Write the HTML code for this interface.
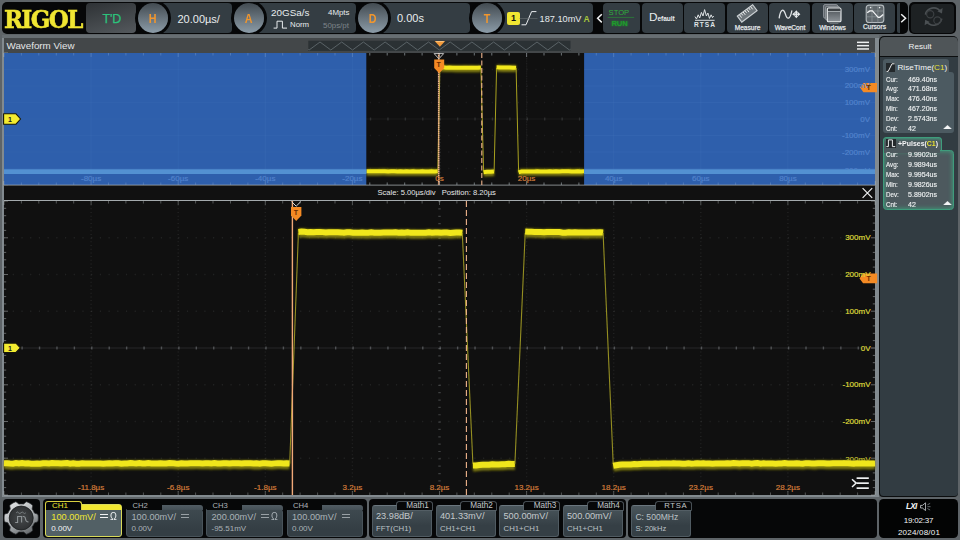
<!DOCTYPE html>
<html><head><meta charset="utf-8"><title>RIGOL Waveform View</title>
<style>
*{box-sizing:border-box;margin:0;padding:0}
html,body{width:960px;height:540px;overflow:hidden;background:#5e6468;font-family:"Liberation Sans",sans-serif;color:#e8ecee}
.a{position:absolute}
.t{position:absolute;white-space:nowrap;line-height:1}
#topbar{left:2px;top:2px;width:906px;height:32px;background:#060708;border-radius:5px}
.btn{position:absolute;top:3px;height:30px;background:#343d43;border-radius:4px}
.knob{position:absolute;top:3px;width:30px;height:30px;border-radius:50%;background:linear-gradient(#424a50,#8c9ca8);box-shadow:0 0 0 3px #060708;clip-path:inset(-1px -4px);color:#f0962e;text-align:center;font-size:12.8px;font-weight:bold;line-height:32px;z-index:3}
.knob span{display:inline-block;transform:scaleX(0.84)}
.lbl{position:absolute;white-space:nowrap;line-height:1;font-size:7px;color:#dfe3e5;text-align:center}
.tl{font-size:8px;text-align:center;-webkit-text-stroke:0.2px}
.vl{font-size:8px;text-align:right;-webkit-text-stroke:0.2px}

.row{position:absolute;left:886px;-webkit-text-stroke:0.15px;font-size:7.6px;line-height:1;white-space:nowrap;color:#eef0f1}
.row i{font-style:normal;display:inline-block;transform-origin:0 0;transform:scaleX(0.82)}
.row b{position:absolute;left:22px;font-weight:normal;transform-origin:0 0;transform:scaleX(0.93)}
.chb{position:absolute;top:501px;height:36px;border-radius:3px}
.chtab{position:absolute;top:501.5px;height:8px;background:#060708;border-radius:2px 2px 0 0;font-size:7.7px;line-height:8.8px;color:#aeb4b8;white-space:nowrap}
.c1{position:absolute;font-size:9.2px;line-height:1;white-space:nowrap}
.c2{position:absolute;font-size:8px;line-height:1;white-space:nowrap}
</style></head><body>
<!-- ===== TOP BAR ===== -->
<div id="topbar" class="a"></div>
<div class="t" id="logo" style="left:4px;top:7.6px;font-family:'DejaVu Serif','Liberation Serif',serif;font-weight:bold;font-size:24px;color:#f0e632;letter-spacing:-1.6px;-webkit-text-stroke:0.6px #f0e632;transform-origin:0 0;transform:scale(0.955,1)">RIGOL</div>
<div class="btn" style="left:86px;width:50px;background:linear-gradient(165deg,#2e3235,#54595d)"></div>
<div class="t" style="left:102.4px;top:13.2px;font-size:12.4px;color:#2cc27c;-webkit-text-stroke:0.25px #2cc27c">T'D</div>

<div class="btn" style="left:160px;width:72px"></div>
<div class="knob" style="left:138px"><span>H</span></div>
<div class="t" style="left:177.5px;top:13.6px;font-size:11px">20.00µs/</div>

<div class="btn" style="left:255px;width:101px"></div>
<div class="knob" style="left:234px"><span>A</span></div>
<div class="t" style="left:271px;top:8.4px;font-size:9.9px">20GSa/s</div>
<svg class="a" style="left:273px;top:20px" width="15" height="9" viewBox="0 0 15 9"><path d="M0.6 8.1H4V1.2H9.4V8.1H14" fill="none" stroke="#e8ecee" stroke-width="1"/></svg>
<div class="t" style="left:290px;top:21.4px;font-size:7.8px">Norm</div>
<div class="t" style="left:328px;top:8.8px;font-size:7.9px">4Mpts</div>
<div class="t" style="left:323px;top:21.8px;font-size:7.9px;color:#7d8489">50ps/pt</div>

<div class="btn" style="left:380px;width:90px"></div>
<div class="knob" style="left:358px"><span>D</span></div>
<div class="t" style="left:397px;top:13px;font-size:11px">0.00s</div>

<div class="btn" style="left:494px;width:99px"></div>
<div class="knob" style="left:472px"><span>T</span></div>
<div class="a" style="left:507px;top:12px;width:13px;height:13px;background:#f0e632;border-radius:2px;color:#111;font-size:9px;font-weight:bold;text-align:center;line-height:13px">1</div>
<div class="t" style="left:539.6px;top:15.3px;font-size:9.2px">187.10mV</div>
<div class="t" style="left:583.6px;top:15.3px;font-size:8.6px;font-weight:bold;color:#a8c83c">A</div>

<div class="btn" style="left:603px;width:37px"></div>
<div class="btn" style="left:642px;width:41px"></div>
<div class="btn" style="left:684px;width:41px"></div>
<div class="btn" style="left:727px;width:41px"></div>
<div class="btn" style="left:769px;width:41px"></div>
<div class="btn" style="left:812px;width:41px"></div>
<div class="btn" style="left:854px;width:41px"></div>
<div class="btn" style="left:897px;width:3px;border-radius:2px 0 0 2px"></div>
<div class="a" style="left:909px;top:2px;width:47px;height:32px;background:#060708;border-radius:5px"></div>
<div class="a" style="left:911px;top:4px;width:43px;height:29px;background:#1d2123;border-radius:4px"></div>


<!-- top button contents -->
<svg class="a" style="left:0;top:0" width="960" height="36" viewBox="0 0 960 36">
<path d="M601.8 14.2L597.6 18.3L601.8 22.4" fill="none" stroke="#f2f3f4" stroke-width="1.5"/>
<path d="M901.2 14.3L905.6 18.3L901.2 22.3" fill="none" stroke="#f2f3f4" stroke-width="1.5"/>
<rect x="607.6" y="16.9" width="26.6" height="0.9" fill="#2b7a38"/>
<!-- trigger edge icon -->
<path d="M521.5 24.8H526L531.6 11.6H536.4" fill="none" stroke="#e8ecee" stroke-width="1"/>
<rect x="519.5" y="18" width="18" height="0.6" fill="#6a7074"/>
<!-- RTSA icon -->
<path d="M695 16.6l1.5 2.4 1.7-4.2 1.5 3.2 1.7-5.6 1.6 3.6 1.6-6.4 1.8 6.4 1.5-3 1.6 5.4 1.6-3.6 1.4 2.8 1.2-1.6" fill="none" stroke="#dfe3e5" stroke-width="1"/>
<rect x="695" y="19.8" width="19.6" height="1" fill="#dfe3e5"/>
<!-- Measure ruler -->
<g transform="translate(747.2 13.4) rotate(-37)"><rect x="-9.6" y="-3.7" width="19.2" height="7.4" fill="#6e767b" stroke="#ccd1d4" stroke-width="1.1"/><path d="M-7 -3.6v3.6M-4.7 -3.6v2.6M-2.4 -3.6v3.6M-0.1 -3.6v2.6M2.2 -3.6v3.6M4.5 -3.6v2.6M6.8 -3.6v3.6" stroke="#eef0f1" stroke-width="0.9"/></g>
<!-- WaveCont -->
<path d="M779.2 17.8c1.4 -9.4 4.6 -9.4 6.2 -3.6s4.6 5.8 6.4 -3.4" fill="none" stroke="#dfe3e5" stroke-width="1.3" stroke-linecap="round"/>
<g fill="#e8ecee"><path d="M796.3 10.2l2.1 2.5h-4.2z"/><path d="M796.3 18.2l2.1 -2.5h-4.2z"/><path d="M792.2 14.2l2.5 -2.1v4.2z"/><path d="M800.4 14.2l-2.5 -2.1v4.2z"/><rect x="795.6" y="12" width="1.4" height="4.4"/><rect x="794.1" y="13.5" width="4.4" height="1.4"/></g>
<!-- Windows -->
<defs><linearGradient id="wg" x1="0" y1="0" x2="0" y2="1"><stop offset="0" stop-color="#4a5055"/><stop offset="1" stop-color="#8e9499"/></linearGradient></defs>
<g fill="#5a6166" stroke="#959ba0" stroke-width="0.9"><rect x="823.6" y="4.6" width="14" height="13.6" rx="1.4"/><rect x="825.4" y="6.3" width="14" height="13.6" rx="1.4"/></g>
<rect x="827.3" y="8" width="13.7" height="13.8" rx="1.4" fill="url(#wg)" stroke="#eceff0" stroke-width="1.1"/>
<rect x="828" y="8.8" width="12.3" height="2.4" fill="#3c4145"/>
<rect x="828" y="11.3" width="12.3" height="0.7" fill="#c8cdd0"/>
<rect x="829.6" y="23" width="8.8" height="0.7" fill="#7d858a"/>
<!-- Cursors -->
<rect x="866.2" y="5.1" width="17.6" height="17.4" rx="2.8" fill="#5e666b" stroke="#b4babe" stroke-width="1.1"/>
<path d="M872 5.4v17M877.9 5.4v17M866.6 11h17M866.6 16.8h17" stroke="#8d959a" stroke-width="0.7" fill="none"/>
<path d="M867.2 12.8l2.6 -1.9h2.6l5.8 6.4h1.6l3.4 -2.8" fill="none" stroke="#f2f3f4" stroke-width="1.2"/>
<circle cx="870.6" cy="7.6" r="0.8" fill="#e8ecee"/><circle cx="879.6" cy="7.6" r="0.8" fill="#e8ecee"/>
<!-- refresh icon -->
<g fill="none" stroke="#4b5053" stroke-width="1.6"><path d="M925.4 14.6a8.4 8.4 0 0 1 15 -3.2"/><path d="M941.8 18.6a8.4 8.4 0 0 1 -15 3.2"/></g>
<path d="M942.6 8l-0.6 5.4-4.6-2.2z" fill="#4b5053"/><path d="M924.6 25.2l0.6-5.4 4.6 2.2z" fill="#4b5053"/>
<circle cx="930.2" cy="14.2" r="3.6" fill="none" stroke="#3c4043" stroke-width="1.2"/><circle cx="937.4" cy="20.4" r="3.6" fill="none" stroke="#3c4043" stroke-width="1.2"/>
</svg>
<div class="t" style="left:608.6px;top:9.4px;font-size:7.6px;color:#2fae3c">STOP</div>
<div class="t" style="left:611.4px;top:19.6px;font-size:7.6px;font-weight:bold;color:#1f9a2c;text-shadow:0 0 2px #1f9a2c">RUN</div>
<div class="t" style="left:649px;top:12.2px;font-size:11.8px;color:#e8ecee">D<span style="font-size:6.6px;font-weight:bold;letter-spacing:-0.1px">efault</span></div>
<div class="t" style="left:684px;width:41px;text-align:center;top:21.9px;font-size:6.6px;font-weight:bold;color:#dfe3e5;letter-spacing:1px;padding-left:1px">RTSA</div>
<div class="t" style="left:727px;width:41px;text-align:center;top:24.5px;font-size:6.6px;-webkit-text-stroke:0.25px #e4e7e9;color:#e4e7e9">Measure</div>
<div class="t" style="left:769.5px;width:41px;text-align:center;top:24.5px;font-size:6.6px;-webkit-text-stroke:0.25px #e4e7e9;color:#e4e7e9">WaveCont</div>
<div class="t" style="left:812px;width:41px;text-align:center;top:24.5px;font-size:6.6px;-webkit-text-stroke:0.25px #e4e7e9;color:#e4e7e9">Windows</div>
<div class="t" style="left:854px;width:41px;text-align:center;top:24.3px;font-size:6.6px;-webkit-text-stroke:0.25px #e4e7e9;color:#e4e7e9">Cursors</div>

<!-- ===== WAVEFORM WINDOW ===== -->
<div class="a" style="left:2px;top:35.5px;width:876.5px;height:461.5px;background:#828a8f"></div>
<div class="a" style="left:2px;top:35px;width:876.5px;height:3.1px;background:#676e72"></div>
<div class="a" style="left:4px;top:38px;width:871px;height:15px;background:#434749"></div>
<div class="t" style="left:6.5px;top:40.6px;font-size:9.8px;color:#e4e6e7">Waveform View</div>
<div class="a" style="left:4px;top:53px;width:871px;height:442px;background:#0d0d0d"></div>
<svg class="a" style="left:0;top:0" width="960" height="540" viewBox="0 0 960 540">
<defs><filter id="gl" filterUnits="userSpaceOnUse" x="0" y="0" width="960" height="540"><feGaussianBlur stdDeviation="1.1"/></filter><filter id="gs" filterUnits="userSpaceOnUse" x="0" y="0" width="960" height="540"><feGaussianBlur stdDeviation="0.6"/></filter></defs>
<rect x="4.0" y="53.0" width="871.0" height="132.0" fill="#101010"/>
<rect x="4.0" y="201.0" width="871.0" height="294.0" fill="#101010"/>
<line x1="91.1" y1="53.0" x2="91.1" y2="185.0" stroke="#9aa0a4" stroke-opacity="0.1" stroke-width="1.4" stroke-dasharray="1 0.65"/>
<line x1="178.2" y1="53.0" x2="178.2" y2="185.0" stroke="#9aa0a4" stroke-opacity="0.1" stroke-width="1.4" stroke-dasharray="1 0.65"/>
<line x1="265.3" y1="53.0" x2="265.3" y2="185.0" stroke="#9aa0a4" stroke-opacity="0.1" stroke-width="1.4" stroke-dasharray="1 0.65"/>
<line x1="352.4" y1="53.0" x2="352.4" y2="185.0" stroke="#9aa0a4" stroke-opacity="0.1" stroke-width="1.4" stroke-dasharray="1 0.65"/>
<line x1="526.6" y1="53.0" x2="526.6" y2="185.0" stroke="#9aa0a4" stroke-opacity="0.1" stroke-width="1.4" stroke-dasharray="1 0.65"/>
<line x1="613.7" y1="53.0" x2="613.7" y2="185.0" stroke="#9aa0a4" stroke-opacity="0.1" stroke-width="1.4" stroke-dasharray="1 0.65"/>
<line x1="700.8" y1="53.0" x2="700.8" y2="185.0" stroke="#9aa0a4" stroke-opacity="0.1" stroke-width="1.4" stroke-dasharray="1 0.65"/>
<line x1="787.9" y1="53.0" x2="787.9" y2="185.0" stroke="#9aa0a4" stroke-opacity="0.1" stroke-width="1.4" stroke-dasharray="1 0.65"/>
<line x1="4.0" y1="69.5" x2="875.0" y2="69.5" stroke="#9aa0a4" stroke-opacity="0.1" stroke-width="1.4" stroke-dasharray="1.2 7.51"/>
<line x1="4.0" y1="86.0" x2="875.0" y2="86.0" stroke="#9aa0a4" stroke-opacity="0.1" stroke-width="1.4" stroke-dasharray="1.2 7.51"/>
<line x1="4.0" y1="102.5" x2="875.0" y2="102.5" stroke="#9aa0a4" stroke-opacity="0.1" stroke-width="1.4" stroke-dasharray="1.2 7.51"/>
<line x1="4.0" y1="135.5" x2="875.0" y2="135.5" stroke="#9aa0a4" stroke-opacity="0.1" stroke-width="1.4" stroke-dasharray="1.2 7.51"/>
<line x1="4.0" y1="152.0" x2="875.0" y2="152.0" stroke="#9aa0a4" stroke-opacity="0.1" stroke-width="1.4" stroke-dasharray="1.2 7.51"/>
<line x1="4.0" y1="168.5" x2="875.0" y2="168.5" stroke="#9aa0a4" stroke-opacity="0.1" stroke-width="1.4" stroke-dasharray="1.2 7.51"/>
<line x1="4.0" y1="119.0" x2="875.0" y2="119.0" stroke="#9aa0a4" stroke-opacity="0.08000000000000002" stroke-width="1"/>
<line x1="4.0" y1="119.0" x2="875.0" y2="119.0" stroke="#9aa0a4" stroke-opacity="0.2" stroke-width="3" stroke-dasharray="1.4 16.02"/>
<line x1="439.5" y1="53.0" x2="439.5" y2="185.0" stroke="#9aa0a4" stroke-opacity="0.16000000000000003" stroke-width="2.4" stroke-dasharray="1.2 2.10"/>
<line x1="4.0" y1="53.0" x2="4.0" y2="57.0" stroke="#c8ccce" stroke-opacity="0.36" stroke-width="1"/>
<line x1="21.4" y1="53.0" x2="21.4" y2="55.5" stroke="#c8ccce" stroke-opacity="0.36" stroke-width="1"/>
<line x1="38.8" y1="53.0" x2="38.8" y2="55.5" stroke="#c8ccce" stroke-opacity="0.36" stroke-width="1"/>
<line x1="56.3" y1="53.0" x2="56.3" y2="55.5" stroke="#c8ccce" stroke-opacity="0.36" stroke-width="1"/>
<line x1="73.7" y1="53.0" x2="73.7" y2="55.5" stroke="#c8ccce" stroke-opacity="0.36" stroke-width="1"/>
<line x1="91.1" y1="53.0" x2="91.1" y2="57.0" stroke="#c8ccce" stroke-opacity="0.36" stroke-width="1"/>
<line x1="108.5" y1="53.0" x2="108.5" y2="55.5" stroke="#c8ccce" stroke-opacity="0.36" stroke-width="1"/>
<line x1="125.9" y1="53.0" x2="125.9" y2="55.5" stroke="#c8ccce" stroke-opacity="0.36" stroke-width="1"/>
<line x1="143.4" y1="53.0" x2="143.4" y2="55.5" stroke="#c8ccce" stroke-opacity="0.36" stroke-width="1"/>
<line x1="160.8" y1="53.0" x2="160.8" y2="55.5" stroke="#c8ccce" stroke-opacity="0.36" stroke-width="1"/>
<line x1="178.2" y1="53.0" x2="178.2" y2="57.0" stroke="#c8ccce" stroke-opacity="0.36" stroke-width="1"/>
<line x1="195.6" y1="53.0" x2="195.6" y2="55.5" stroke="#c8ccce" stroke-opacity="0.36" stroke-width="1"/>
<line x1="213.0" y1="53.0" x2="213.0" y2="55.5" stroke="#c8ccce" stroke-opacity="0.36" stroke-width="1"/>
<line x1="230.5" y1="53.0" x2="230.5" y2="55.5" stroke="#c8ccce" stroke-opacity="0.36" stroke-width="1"/>
<line x1="247.9" y1="53.0" x2="247.9" y2="55.5" stroke="#c8ccce" stroke-opacity="0.36" stroke-width="1"/>
<line x1="265.3" y1="53.0" x2="265.3" y2="57.0" stroke="#c8ccce" stroke-opacity="0.36" stroke-width="1"/>
<line x1="282.7" y1="53.0" x2="282.7" y2="55.5" stroke="#c8ccce" stroke-opacity="0.36" stroke-width="1"/>
<line x1="300.1" y1="53.0" x2="300.1" y2="55.5" stroke="#c8ccce" stroke-opacity="0.36" stroke-width="1"/>
<line x1="317.6" y1="53.0" x2="317.6" y2="55.5" stroke="#c8ccce" stroke-opacity="0.36" stroke-width="1"/>
<line x1="335.0" y1="53.0" x2="335.0" y2="55.5" stroke="#c8ccce" stroke-opacity="0.36" stroke-width="1"/>
<line x1="352.4" y1="53.0" x2="352.4" y2="57.0" stroke="#c8ccce" stroke-opacity="0.36" stroke-width="1"/>
<line x1="369.8" y1="53.0" x2="369.8" y2="55.5" stroke="#c8ccce" stroke-opacity="0.36" stroke-width="1"/>
<line x1="387.2" y1="53.0" x2="387.2" y2="55.5" stroke="#c8ccce" stroke-opacity="0.36" stroke-width="1"/>
<line x1="404.7" y1="53.0" x2="404.7" y2="55.5" stroke="#c8ccce" stroke-opacity="0.36" stroke-width="1"/>
<line x1="422.1" y1="53.0" x2="422.1" y2="55.5" stroke="#c8ccce" stroke-opacity="0.36" stroke-width="1"/>
<line x1="439.5" y1="53.0" x2="439.5" y2="57.0" stroke="#c8ccce" stroke-opacity="0.36" stroke-width="1"/>
<line x1="456.9" y1="53.0" x2="456.9" y2="55.5" stroke="#c8ccce" stroke-opacity="0.36" stroke-width="1"/>
<line x1="474.3" y1="53.0" x2="474.3" y2="55.5" stroke="#c8ccce" stroke-opacity="0.36" stroke-width="1"/>
<line x1="491.8" y1="53.0" x2="491.8" y2="55.5" stroke="#c8ccce" stroke-opacity="0.36" stroke-width="1"/>
<line x1="509.2" y1="53.0" x2="509.2" y2="55.5" stroke="#c8ccce" stroke-opacity="0.36" stroke-width="1"/>
<line x1="526.6" y1="53.0" x2="526.6" y2="57.0" stroke="#c8ccce" stroke-opacity="0.36" stroke-width="1"/>
<line x1="544.0" y1="53.0" x2="544.0" y2="55.5" stroke="#c8ccce" stroke-opacity="0.36" stroke-width="1"/>
<line x1="561.4" y1="53.0" x2="561.4" y2="55.5" stroke="#c8ccce" stroke-opacity="0.36" stroke-width="1"/>
<line x1="578.9" y1="53.0" x2="578.9" y2="55.5" stroke="#c8ccce" stroke-opacity="0.36" stroke-width="1"/>
<line x1="596.3" y1="53.0" x2="596.3" y2="55.5" stroke="#c8ccce" stroke-opacity="0.36" stroke-width="1"/>
<line x1="613.7" y1="53.0" x2="613.7" y2="57.0" stroke="#c8ccce" stroke-opacity="0.36" stroke-width="1"/>
<line x1="631.1" y1="53.0" x2="631.1" y2="55.5" stroke="#c8ccce" stroke-opacity="0.36" stroke-width="1"/>
<line x1="648.5" y1="53.0" x2="648.5" y2="55.5" stroke="#c8ccce" stroke-opacity="0.36" stroke-width="1"/>
<line x1="666.0" y1="53.0" x2="666.0" y2="55.5" stroke="#c8ccce" stroke-opacity="0.36" stroke-width="1"/>
<line x1="683.4" y1="53.0" x2="683.4" y2="55.5" stroke="#c8ccce" stroke-opacity="0.36" stroke-width="1"/>
<line x1="700.8" y1="53.0" x2="700.8" y2="57.0" stroke="#c8ccce" stroke-opacity="0.36" stroke-width="1"/>
<line x1="718.2" y1="53.0" x2="718.2" y2="55.5" stroke="#c8ccce" stroke-opacity="0.36" stroke-width="1"/>
<line x1="735.6" y1="53.0" x2="735.6" y2="55.5" stroke="#c8ccce" stroke-opacity="0.36" stroke-width="1"/>
<line x1="753.1" y1="53.0" x2="753.1" y2="55.5" stroke="#c8ccce" stroke-opacity="0.36" stroke-width="1"/>
<line x1="770.5" y1="53.0" x2="770.5" y2="55.5" stroke="#c8ccce" stroke-opacity="0.36" stroke-width="1"/>
<line x1="787.9" y1="53.0" x2="787.9" y2="57.0" stroke="#c8ccce" stroke-opacity="0.36" stroke-width="1"/>
<line x1="805.3" y1="53.0" x2="805.3" y2="55.5" stroke="#c8ccce" stroke-opacity="0.36" stroke-width="1"/>
<line x1="822.7" y1="53.0" x2="822.7" y2="55.5" stroke="#c8ccce" stroke-opacity="0.36" stroke-width="1"/>
<line x1="840.2" y1="53.0" x2="840.2" y2="55.5" stroke="#c8ccce" stroke-opacity="0.36" stroke-width="1"/>
<line x1="857.6" y1="53.0" x2="857.6" y2="55.5" stroke="#c8ccce" stroke-opacity="0.36" stroke-width="1"/>
<line x1="875.0" y1="53.0" x2="875.0" y2="57.0" stroke="#c8ccce" stroke-opacity="0.36" stroke-width="1"/>
<line x1="4.0" y1="185.0" x2="4.0" y2="181.0" stroke="#c8ccce" stroke-opacity="0.36" stroke-width="1"/>
<line x1="21.4" y1="185.0" x2="21.4" y2="182.5" stroke="#c8ccce" stroke-opacity="0.36" stroke-width="1"/>
<line x1="38.8" y1="185.0" x2="38.8" y2="182.5" stroke="#c8ccce" stroke-opacity="0.36" stroke-width="1"/>
<line x1="56.3" y1="185.0" x2="56.3" y2="182.5" stroke="#c8ccce" stroke-opacity="0.36" stroke-width="1"/>
<line x1="73.7" y1="185.0" x2="73.7" y2="182.5" stroke="#c8ccce" stroke-opacity="0.36" stroke-width="1"/>
<line x1="91.1" y1="185.0" x2="91.1" y2="181.0" stroke="#c8ccce" stroke-opacity="0.36" stroke-width="1"/>
<line x1="108.5" y1="185.0" x2="108.5" y2="182.5" stroke="#c8ccce" stroke-opacity="0.36" stroke-width="1"/>
<line x1="125.9" y1="185.0" x2="125.9" y2="182.5" stroke="#c8ccce" stroke-opacity="0.36" stroke-width="1"/>
<line x1="143.4" y1="185.0" x2="143.4" y2="182.5" stroke="#c8ccce" stroke-opacity="0.36" stroke-width="1"/>
<line x1="160.8" y1="185.0" x2="160.8" y2="182.5" stroke="#c8ccce" stroke-opacity="0.36" stroke-width="1"/>
<line x1="178.2" y1="185.0" x2="178.2" y2="181.0" stroke="#c8ccce" stroke-opacity="0.36" stroke-width="1"/>
<line x1="195.6" y1="185.0" x2="195.6" y2="182.5" stroke="#c8ccce" stroke-opacity="0.36" stroke-width="1"/>
<line x1="213.0" y1="185.0" x2="213.0" y2="182.5" stroke="#c8ccce" stroke-opacity="0.36" stroke-width="1"/>
<line x1="230.5" y1="185.0" x2="230.5" y2="182.5" stroke="#c8ccce" stroke-opacity="0.36" stroke-width="1"/>
<line x1="247.9" y1="185.0" x2="247.9" y2="182.5" stroke="#c8ccce" stroke-opacity="0.36" stroke-width="1"/>
<line x1="265.3" y1="185.0" x2="265.3" y2="181.0" stroke="#c8ccce" stroke-opacity="0.36" stroke-width="1"/>
<line x1="282.7" y1="185.0" x2="282.7" y2="182.5" stroke="#c8ccce" stroke-opacity="0.36" stroke-width="1"/>
<line x1="300.1" y1="185.0" x2="300.1" y2="182.5" stroke="#c8ccce" stroke-opacity="0.36" stroke-width="1"/>
<line x1="317.6" y1="185.0" x2="317.6" y2="182.5" stroke="#c8ccce" stroke-opacity="0.36" stroke-width="1"/>
<line x1="335.0" y1="185.0" x2="335.0" y2="182.5" stroke="#c8ccce" stroke-opacity="0.36" stroke-width="1"/>
<line x1="352.4" y1="185.0" x2="352.4" y2="181.0" stroke="#c8ccce" stroke-opacity="0.36" stroke-width="1"/>
<line x1="369.8" y1="185.0" x2="369.8" y2="182.5" stroke="#c8ccce" stroke-opacity="0.36" stroke-width="1"/>
<line x1="387.2" y1="185.0" x2="387.2" y2="182.5" stroke="#c8ccce" stroke-opacity="0.36" stroke-width="1"/>
<line x1="404.7" y1="185.0" x2="404.7" y2="182.5" stroke="#c8ccce" stroke-opacity="0.36" stroke-width="1"/>
<line x1="422.1" y1="185.0" x2="422.1" y2="182.5" stroke="#c8ccce" stroke-opacity="0.36" stroke-width="1"/>
<line x1="439.5" y1="185.0" x2="439.5" y2="181.0" stroke="#c8ccce" stroke-opacity="0.36" stroke-width="1"/>
<line x1="456.9" y1="185.0" x2="456.9" y2="182.5" stroke="#c8ccce" stroke-opacity="0.36" stroke-width="1"/>
<line x1="474.3" y1="185.0" x2="474.3" y2="182.5" stroke="#c8ccce" stroke-opacity="0.36" stroke-width="1"/>
<line x1="491.8" y1="185.0" x2="491.8" y2="182.5" stroke="#c8ccce" stroke-opacity="0.36" stroke-width="1"/>
<line x1="509.2" y1="185.0" x2="509.2" y2="182.5" stroke="#c8ccce" stroke-opacity="0.36" stroke-width="1"/>
<line x1="526.6" y1="185.0" x2="526.6" y2="181.0" stroke="#c8ccce" stroke-opacity="0.36" stroke-width="1"/>
<line x1="544.0" y1="185.0" x2="544.0" y2="182.5" stroke="#c8ccce" stroke-opacity="0.36" stroke-width="1"/>
<line x1="561.4" y1="185.0" x2="561.4" y2="182.5" stroke="#c8ccce" stroke-opacity="0.36" stroke-width="1"/>
<line x1="578.9" y1="185.0" x2="578.9" y2="182.5" stroke="#c8ccce" stroke-opacity="0.36" stroke-width="1"/>
<line x1="596.3" y1="185.0" x2="596.3" y2="182.5" stroke="#c8ccce" stroke-opacity="0.36" stroke-width="1"/>
<line x1="613.7" y1="185.0" x2="613.7" y2="181.0" stroke="#c8ccce" stroke-opacity="0.36" stroke-width="1"/>
<line x1="631.1" y1="185.0" x2="631.1" y2="182.5" stroke="#c8ccce" stroke-opacity="0.36" stroke-width="1"/>
<line x1="648.5" y1="185.0" x2="648.5" y2="182.5" stroke="#c8ccce" stroke-opacity="0.36" stroke-width="1"/>
<line x1="666.0" y1="185.0" x2="666.0" y2="182.5" stroke="#c8ccce" stroke-opacity="0.36" stroke-width="1"/>
<line x1="683.4" y1="185.0" x2="683.4" y2="182.5" stroke="#c8ccce" stroke-opacity="0.36" stroke-width="1"/>
<line x1="700.8" y1="185.0" x2="700.8" y2="181.0" stroke="#c8ccce" stroke-opacity="0.36" stroke-width="1"/>
<line x1="718.2" y1="185.0" x2="718.2" y2="182.5" stroke="#c8ccce" stroke-opacity="0.36" stroke-width="1"/>
<line x1="735.6" y1="185.0" x2="735.6" y2="182.5" stroke="#c8ccce" stroke-opacity="0.36" stroke-width="1"/>
<line x1="753.1" y1="185.0" x2="753.1" y2="182.5" stroke="#c8ccce" stroke-opacity="0.36" stroke-width="1"/>
<line x1="770.5" y1="185.0" x2="770.5" y2="182.5" stroke="#c8ccce" stroke-opacity="0.36" stroke-width="1"/>
<line x1="787.9" y1="185.0" x2="787.9" y2="181.0" stroke="#c8ccce" stroke-opacity="0.36" stroke-width="1"/>
<line x1="805.3" y1="185.0" x2="805.3" y2="182.5" stroke="#c8ccce" stroke-opacity="0.36" stroke-width="1"/>
<line x1="822.7" y1="185.0" x2="822.7" y2="182.5" stroke="#c8ccce" stroke-opacity="0.36" stroke-width="1"/>
<line x1="840.2" y1="185.0" x2="840.2" y2="182.5" stroke="#c8ccce" stroke-opacity="0.36" stroke-width="1"/>
<line x1="857.6" y1="185.0" x2="857.6" y2="182.5" stroke="#c8ccce" stroke-opacity="0.36" stroke-width="1"/>
<line x1="875.0" y1="185.0" x2="875.0" y2="181.0" stroke="#c8ccce" stroke-opacity="0.36" stroke-width="1"/>
<line x1="4.0" y1="53.0" x2="8.0" y2="53.0" stroke="#c8ccce" stroke-opacity="0.45" stroke-width="1"/>
<line x1="875.0" y1="53.0" x2="871.0" y2="53.0" stroke="#c8ccce" stroke-opacity="0.45" stroke-width="1"/>
<line x1="4.0" y1="56.3" x2="6.2" y2="56.3" stroke="#c8ccce" stroke-opacity="0.45" stroke-width="1"/>
<line x1="875.0" y1="56.3" x2="872.8" y2="56.3" stroke="#c8ccce" stroke-opacity="0.45" stroke-width="1"/>
<line x1="4.0" y1="59.6" x2="6.2" y2="59.6" stroke="#c8ccce" stroke-opacity="0.45" stroke-width="1"/>
<line x1="875.0" y1="59.6" x2="872.8" y2="59.6" stroke="#c8ccce" stroke-opacity="0.45" stroke-width="1"/>
<line x1="4.0" y1="62.9" x2="6.2" y2="62.9" stroke="#c8ccce" stroke-opacity="0.45" stroke-width="1"/>
<line x1="875.0" y1="62.9" x2="872.8" y2="62.9" stroke="#c8ccce" stroke-opacity="0.45" stroke-width="1"/>
<line x1="4.0" y1="66.2" x2="6.2" y2="66.2" stroke="#c8ccce" stroke-opacity="0.45" stroke-width="1"/>
<line x1="875.0" y1="66.2" x2="872.8" y2="66.2" stroke="#c8ccce" stroke-opacity="0.45" stroke-width="1"/>
<line x1="4.0" y1="69.5" x2="8.0" y2="69.5" stroke="#c8ccce" stroke-opacity="0.45" stroke-width="1"/>
<line x1="875.0" y1="69.5" x2="871.0" y2="69.5" stroke="#c8ccce" stroke-opacity="0.45" stroke-width="1"/>
<line x1="4.0" y1="72.8" x2="6.2" y2="72.8" stroke="#c8ccce" stroke-opacity="0.45" stroke-width="1"/>
<line x1="875.0" y1="72.8" x2="872.8" y2="72.8" stroke="#c8ccce" stroke-opacity="0.45" stroke-width="1"/>
<line x1="4.0" y1="76.1" x2="6.2" y2="76.1" stroke="#c8ccce" stroke-opacity="0.45" stroke-width="1"/>
<line x1="875.0" y1="76.1" x2="872.8" y2="76.1" stroke="#c8ccce" stroke-opacity="0.45" stroke-width="1"/>
<line x1="4.0" y1="79.4" x2="6.2" y2="79.4" stroke="#c8ccce" stroke-opacity="0.45" stroke-width="1"/>
<line x1="875.0" y1="79.4" x2="872.8" y2="79.4" stroke="#c8ccce" stroke-opacity="0.45" stroke-width="1"/>
<line x1="4.0" y1="82.7" x2="6.2" y2="82.7" stroke="#c8ccce" stroke-opacity="0.45" stroke-width="1"/>
<line x1="875.0" y1="82.7" x2="872.8" y2="82.7" stroke="#c8ccce" stroke-opacity="0.45" stroke-width="1"/>
<line x1="4.0" y1="86.0" x2="8.0" y2="86.0" stroke="#c8ccce" stroke-opacity="0.45" stroke-width="1"/>
<line x1="875.0" y1="86.0" x2="871.0" y2="86.0" stroke="#c8ccce" stroke-opacity="0.45" stroke-width="1"/>
<line x1="4.0" y1="89.3" x2="6.2" y2="89.3" stroke="#c8ccce" stroke-opacity="0.45" stroke-width="1"/>
<line x1="875.0" y1="89.3" x2="872.8" y2="89.3" stroke="#c8ccce" stroke-opacity="0.45" stroke-width="1"/>
<line x1="4.0" y1="92.6" x2="6.2" y2="92.6" stroke="#c8ccce" stroke-opacity="0.45" stroke-width="1"/>
<line x1="875.0" y1="92.6" x2="872.8" y2="92.6" stroke="#c8ccce" stroke-opacity="0.45" stroke-width="1"/>
<line x1="4.0" y1="95.9" x2="6.2" y2="95.9" stroke="#c8ccce" stroke-opacity="0.45" stroke-width="1"/>
<line x1="875.0" y1="95.9" x2="872.8" y2="95.9" stroke="#c8ccce" stroke-opacity="0.45" stroke-width="1"/>
<line x1="4.0" y1="99.2" x2="6.2" y2="99.2" stroke="#c8ccce" stroke-opacity="0.45" stroke-width="1"/>
<line x1="875.0" y1="99.2" x2="872.8" y2="99.2" stroke="#c8ccce" stroke-opacity="0.45" stroke-width="1"/>
<line x1="4.0" y1="102.5" x2="8.0" y2="102.5" stroke="#c8ccce" stroke-opacity="0.45" stroke-width="1"/>
<line x1="875.0" y1="102.5" x2="871.0" y2="102.5" stroke="#c8ccce" stroke-opacity="0.45" stroke-width="1"/>
<line x1="4.0" y1="105.8" x2="6.2" y2="105.8" stroke="#c8ccce" stroke-opacity="0.45" stroke-width="1"/>
<line x1="875.0" y1="105.8" x2="872.8" y2="105.8" stroke="#c8ccce" stroke-opacity="0.45" stroke-width="1"/>
<line x1="4.0" y1="109.1" x2="6.2" y2="109.1" stroke="#c8ccce" stroke-opacity="0.45" stroke-width="1"/>
<line x1="875.0" y1="109.1" x2="872.8" y2="109.1" stroke="#c8ccce" stroke-opacity="0.45" stroke-width="1"/>
<line x1="4.0" y1="112.4" x2="6.2" y2="112.4" stroke="#c8ccce" stroke-opacity="0.45" stroke-width="1"/>
<line x1="875.0" y1="112.4" x2="872.8" y2="112.4" stroke="#c8ccce" stroke-opacity="0.45" stroke-width="1"/>
<line x1="4.0" y1="115.7" x2="6.2" y2="115.7" stroke="#c8ccce" stroke-opacity="0.45" stroke-width="1"/>
<line x1="875.0" y1="115.7" x2="872.8" y2="115.7" stroke="#c8ccce" stroke-opacity="0.45" stroke-width="1"/>
<line x1="4.0" y1="119.0" x2="8.0" y2="119.0" stroke="#c8ccce" stroke-opacity="0.45" stroke-width="1"/>
<line x1="875.0" y1="119.0" x2="871.0" y2="119.0" stroke="#c8ccce" stroke-opacity="0.45" stroke-width="1"/>
<line x1="4.0" y1="122.3" x2="6.2" y2="122.3" stroke="#c8ccce" stroke-opacity="0.45" stroke-width="1"/>
<line x1="875.0" y1="122.3" x2="872.8" y2="122.3" stroke="#c8ccce" stroke-opacity="0.45" stroke-width="1"/>
<line x1="4.0" y1="125.6" x2="6.2" y2="125.6" stroke="#c8ccce" stroke-opacity="0.45" stroke-width="1"/>
<line x1="875.0" y1="125.6" x2="872.8" y2="125.6" stroke="#c8ccce" stroke-opacity="0.45" stroke-width="1"/>
<line x1="4.0" y1="128.9" x2="6.2" y2="128.9" stroke="#c8ccce" stroke-opacity="0.45" stroke-width="1"/>
<line x1="875.0" y1="128.9" x2="872.8" y2="128.9" stroke="#c8ccce" stroke-opacity="0.45" stroke-width="1"/>
<line x1="4.0" y1="132.2" x2="6.2" y2="132.2" stroke="#c8ccce" stroke-opacity="0.45" stroke-width="1"/>
<line x1="875.0" y1="132.2" x2="872.8" y2="132.2" stroke="#c8ccce" stroke-opacity="0.45" stroke-width="1"/>
<line x1="4.0" y1="135.5" x2="8.0" y2="135.5" stroke="#c8ccce" stroke-opacity="0.45" stroke-width="1"/>
<line x1="875.0" y1="135.5" x2="871.0" y2="135.5" stroke="#c8ccce" stroke-opacity="0.45" stroke-width="1"/>
<line x1="4.0" y1="138.8" x2="6.2" y2="138.8" stroke="#c8ccce" stroke-opacity="0.45" stroke-width="1"/>
<line x1="875.0" y1="138.8" x2="872.8" y2="138.8" stroke="#c8ccce" stroke-opacity="0.45" stroke-width="1"/>
<line x1="4.0" y1="142.1" x2="6.2" y2="142.1" stroke="#c8ccce" stroke-opacity="0.45" stroke-width="1"/>
<line x1="875.0" y1="142.1" x2="872.8" y2="142.1" stroke="#c8ccce" stroke-opacity="0.45" stroke-width="1"/>
<line x1="4.0" y1="145.4" x2="6.2" y2="145.4" stroke="#c8ccce" stroke-opacity="0.45" stroke-width="1"/>
<line x1="875.0" y1="145.4" x2="872.8" y2="145.4" stroke="#c8ccce" stroke-opacity="0.45" stroke-width="1"/>
<line x1="4.0" y1="148.7" x2="6.2" y2="148.7" stroke="#c8ccce" stroke-opacity="0.45" stroke-width="1"/>
<line x1="875.0" y1="148.7" x2="872.8" y2="148.7" stroke="#c8ccce" stroke-opacity="0.45" stroke-width="1"/>
<line x1="4.0" y1="152.0" x2="8.0" y2="152.0" stroke="#c8ccce" stroke-opacity="0.45" stroke-width="1"/>
<line x1="875.0" y1="152.0" x2="871.0" y2="152.0" stroke="#c8ccce" stroke-opacity="0.45" stroke-width="1"/>
<line x1="4.0" y1="155.3" x2="6.2" y2="155.3" stroke="#c8ccce" stroke-opacity="0.45" stroke-width="1"/>
<line x1="875.0" y1="155.3" x2="872.8" y2="155.3" stroke="#c8ccce" stroke-opacity="0.45" stroke-width="1"/>
<line x1="4.0" y1="158.6" x2="6.2" y2="158.6" stroke="#c8ccce" stroke-opacity="0.45" stroke-width="1"/>
<line x1="875.0" y1="158.6" x2="872.8" y2="158.6" stroke="#c8ccce" stroke-opacity="0.45" stroke-width="1"/>
<line x1="4.0" y1="161.9" x2="6.2" y2="161.9" stroke="#c8ccce" stroke-opacity="0.45" stroke-width="1"/>
<line x1="875.0" y1="161.9" x2="872.8" y2="161.9" stroke="#c8ccce" stroke-opacity="0.45" stroke-width="1"/>
<line x1="4.0" y1="165.2" x2="6.2" y2="165.2" stroke="#c8ccce" stroke-opacity="0.45" stroke-width="1"/>
<line x1="875.0" y1="165.2" x2="872.8" y2="165.2" stroke="#c8ccce" stroke-opacity="0.45" stroke-width="1"/>
<line x1="4.0" y1="168.5" x2="8.0" y2="168.5" stroke="#c8ccce" stroke-opacity="0.45" stroke-width="1"/>
<line x1="875.0" y1="168.5" x2="871.0" y2="168.5" stroke="#c8ccce" stroke-opacity="0.45" stroke-width="1"/>
<line x1="4.0" y1="171.8" x2="6.2" y2="171.8" stroke="#c8ccce" stroke-opacity="0.45" stroke-width="1"/>
<line x1="875.0" y1="171.8" x2="872.8" y2="171.8" stroke="#c8ccce" stroke-opacity="0.45" stroke-width="1"/>
<line x1="4.0" y1="175.1" x2="6.2" y2="175.1" stroke="#c8ccce" stroke-opacity="0.45" stroke-width="1"/>
<line x1="875.0" y1="175.1" x2="872.8" y2="175.1" stroke="#c8ccce" stroke-opacity="0.45" stroke-width="1"/>
<line x1="4.0" y1="178.4" x2="6.2" y2="178.4" stroke="#c8ccce" stroke-opacity="0.45" stroke-width="1"/>
<line x1="875.0" y1="178.4" x2="872.8" y2="178.4" stroke="#c8ccce" stroke-opacity="0.45" stroke-width="1"/>
<line x1="4.0" y1="181.7" x2="6.2" y2="181.7" stroke="#c8ccce" stroke-opacity="0.45" stroke-width="1"/>
<line x1="875.0" y1="181.7" x2="872.8" y2="181.7" stroke="#c8ccce" stroke-opacity="0.45" stroke-width="1"/>
<line x1="4.0" y1="185.0" x2="8.0" y2="185.0" stroke="#c8ccce" stroke-opacity="0.45" stroke-width="1"/>
<line x1="875.0" y1="185.0" x2="871.0" y2="185.0" stroke="#c8ccce" stroke-opacity="0.45" stroke-width="1"/>
<line x1="91.1" y1="201.0" x2="91.1" y2="495.0" stroke="#9aa0a4" stroke-opacity="0.13" stroke-width="1.4" stroke-dasharray="1 2.67"/>
<line x1="178.2" y1="201.0" x2="178.2" y2="495.0" stroke="#9aa0a4" stroke-opacity="0.13" stroke-width="1.4" stroke-dasharray="1 2.67"/>
<line x1="265.3" y1="201.0" x2="265.3" y2="495.0" stroke="#9aa0a4" stroke-opacity="0.13" stroke-width="1.4" stroke-dasharray="1 2.67"/>
<line x1="352.4" y1="201.0" x2="352.4" y2="495.0" stroke="#9aa0a4" stroke-opacity="0.13" stroke-width="1.4" stroke-dasharray="1 2.67"/>
<line x1="526.6" y1="201.0" x2="526.6" y2="495.0" stroke="#9aa0a4" stroke-opacity="0.13" stroke-width="1.4" stroke-dasharray="1 2.67"/>
<line x1="613.7" y1="201.0" x2="613.7" y2="495.0" stroke="#9aa0a4" stroke-opacity="0.13" stroke-width="1.4" stroke-dasharray="1 2.67"/>
<line x1="700.8" y1="201.0" x2="700.8" y2="495.0" stroke="#9aa0a4" stroke-opacity="0.13" stroke-width="1.4" stroke-dasharray="1 2.67"/>
<line x1="787.9" y1="201.0" x2="787.9" y2="495.0" stroke="#9aa0a4" stroke-opacity="0.13" stroke-width="1.4" stroke-dasharray="1 2.67"/>
<line x1="4.0" y1="237.8" x2="875.0" y2="237.8" stroke="#9aa0a4" stroke-opacity="0.13" stroke-width="1.4" stroke-dasharray="1.2 7.51"/>
<line x1="4.0" y1="274.5" x2="875.0" y2="274.5" stroke="#9aa0a4" stroke-opacity="0.13" stroke-width="1.4" stroke-dasharray="1.2 7.51"/>
<line x1="4.0" y1="311.2" x2="875.0" y2="311.2" stroke="#9aa0a4" stroke-opacity="0.13" stroke-width="1.4" stroke-dasharray="1.2 7.51"/>
<line x1="4.0" y1="384.8" x2="875.0" y2="384.8" stroke="#9aa0a4" stroke-opacity="0.13" stroke-width="1.4" stroke-dasharray="1.2 7.51"/>
<line x1="4.0" y1="421.5" x2="875.0" y2="421.5" stroke="#9aa0a4" stroke-opacity="0.13" stroke-width="1.4" stroke-dasharray="1.2 7.51"/>
<line x1="4.0" y1="458.2" x2="875.0" y2="458.2" stroke="#9aa0a4" stroke-opacity="0.13" stroke-width="1.4" stroke-dasharray="1.2 7.51"/>
<line x1="4.0" y1="348.0" x2="875.0" y2="348.0" stroke="#9aa0a4" stroke-opacity="0.168" stroke-width="1"/>
<line x1="4.0" y1="348.0" x2="875.0" y2="348.0" stroke="#9aa0a4" stroke-opacity="0.42" stroke-width="3" stroke-dasharray="1.4 16.02"/>
<line x1="439.5" y1="201.0" x2="439.5" y2="495.0" stroke="#9aa0a4" stroke-opacity="0.336" stroke-width="2.4" stroke-dasharray="1.2 6.15"/>
<line x1="4.0" y1="201.0" x2="4.0" y2="205.0" stroke="#c8ccce" stroke-opacity="0.36" stroke-width="1"/>
<line x1="21.4" y1="201.0" x2="21.4" y2="203.5" stroke="#c8ccce" stroke-opacity="0.36" stroke-width="1"/>
<line x1="38.8" y1="201.0" x2="38.8" y2="203.5" stroke="#c8ccce" stroke-opacity="0.36" stroke-width="1"/>
<line x1="56.3" y1="201.0" x2="56.3" y2="203.5" stroke="#c8ccce" stroke-opacity="0.36" stroke-width="1"/>
<line x1="73.7" y1="201.0" x2="73.7" y2="203.5" stroke="#c8ccce" stroke-opacity="0.36" stroke-width="1"/>
<line x1="91.1" y1="201.0" x2="91.1" y2="205.0" stroke="#c8ccce" stroke-opacity="0.36" stroke-width="1"/>
<line x1="108.5" y1="201.0" x2="108.5" y2="203.5" stroke="#c8ccce" stroke-opacity="0.36" stroke-width="1"/>
<line x1="125.9" y1="201.0" x2="125.9" y2="203.5" stroke="#c8ccce" stroke-opacity="0.36" stroke-width="1"/>
<line x1="143.4" y1="201.0" x2="143.4" y2="203.5" stroke="#c8ccce" stroke-opacity="0.36" stroke-width="1"/>
<line x1="160.8" y1="201.0" x2="160.8" y2="203.5" stroke="#c8ccce" stroke-opacity="0.36" stroke-width="1"/>
<line x1="178.2" y1="201.0" x2="178.2" y2="205.0" stroke="#c8ccce" stroke-opacity="0.36" stroke-width="1"/>
<line x1="195.6" y1="201.0" x2="195.6" y2="203.5" stroke="#c8ccce" stroke-opacity="0.36" stroke-width="1"/>
<line x1="213.0" y1="201.0" x2="213.0" y2="203.5" stroke="#c8ccce" stroke-opacity="0.36" stroke-width="1"/>
<line x1="230.5" y1="201.0" x2="230.5" y2="203.5" stroke="#c8ccce" stroke-opacity="0.36" stroke-width="1"/>
<line x1="247.9" y1="201.0" x2="247.9" y2="203.5" stroke="#c8ccce" stroke-opacity="0.36" stroke-width="1"/>
<line x1="265.3" y1="201.0" x2="265.3" y2="205.0" stroke="#c8ccce" stroke-opacity="0.36" stroke-width="1"/>
<line x1="282.7" y1="201.0" x2="282.7" y2="203.5" stroke="#c8ccce" stroke-opacity="0.36" stroke-width="1"/>
<line x1="300.1" y1="201.0" x2="300.1" y2="203.5" stroke="#c8ccce" stroke-opacity="0.36" stroke-width="1"/>
<line x1="317.6" y1="201.0" x2="317.6" y2="203.5" stroke="#c8ccce" stroke-opacity="0.36" stroke-width="1"/>
<line x1="335.0" y1="201.0" x2="335.0" y2="203.5" stroke="#c8ccce" stroke-opacity="0.36" stroke-width="1"/>
<line x1="352.4" y1="201.0" x2="352.4" y2="205.0" stroke="#c8ccce" stroke-opacity="0.36" stroke-width="1"/>
<line x1="369.8" y1="201.0" x2="369.8" y2="203.5" stroke="#c8ccce" stroke-opacity="0.36" stroke-width="1"/>
<line x1="387.2" y1="201.0" x2="387.2" y2="203.5" stroke="#c8ccce" stroke-opacity="0.36" stroke-width="1"/>
<line x1="404.7" y1="201.0" x2="404.7" y2="203.5" stroke="#c8ccce" stroke-opacity="0.36" stroke-width="1"/>
<line x1="422.1" y1="201.0" x2="422.1" y2="203.5" stroke="#c8ccce" stroke-opacity="0.36" stroke-width="1"/>
<line x1="439.5" y1="201.0" x2="439.5" y2="205.0" stroke="#c8ccce" stroke-opacity="0.36" stroke-width="1"/>
<line x1="456.9" y1="201.0" x2="456.9" y2="203.5" stroke="#c8ccce" stroke-opacity="0.36" stroke-width="1"/>
<line x1="474.3" y1="201.0" x2="474.3" y2="203.5" stroke="#c8ccce" stroke-opacity="0.36" stroke-width="1"/>
<line x1="491.8" y1="201.0" x2="491.8" y2="203.5" stroke="#c8ccce" stroke-opacity="0.36" stroke-width="1"/>
<line x1="509.2" y1="201.0" x2="509.2" y2="203.5" stroke="#c8ccce" stroke-opacity="0.36" stroke-width="1"/>
<line x1="526.6" y1="201.0" x2="526.6" y2="205.0" stroke="#c8ccce" stroke-opacity="0.36" stroke-width="1"/>
<line x1="544.0" y1="201.0" x2="544.0" y2="203.5" stroke="#c8ccce" stroke-opacity="0.36" stroke-width="1"/>
<line x1="561.4" y1="201.0" x2="561.4" y2="203.5" stroke="#c8ccce" stroke-opacity="0.36" stroke-width="1"/>
<line x1="578.9" y1="201.0" x2="578.9" y2="203.5" stroke="#c8ccce" stroke-opacity="0.36" stroke-width="1"/>
<line x1="596.3" y1="201.0" x2="596.3" y2="203.5" stroke="#c8ccce" stroke-opacity="0.36" stroke-width="1"/>
<line x1="613.7" y1="201.0" x2="613.7" y2="205.0" stroke="#c8ccce" stroke-opacity="0.36" stroke-width="1"/>
<line x1="631.1" y1="201.0" x2="631.1" y2="203.5" stroke="#c8ccce" stroke-opacity="0.36" stroke-width="1"/>
<line x1="648.5" y1="201.0" x2="648.5" y2="203.5" stroke="#c8ccce" stroke-opacity="0.36" stroke-width="1"/>
<line x1="666.0" y1="201.0" x2="666.0" y2="203.5" stroke="#c8ccce" stroke-opacity="0.36" stroke-width="1"/>
<line x1="683.4" y1="201.0" x2="683.4" y2="203.5" stroke="#c8ccce" stroke-opacity="0.36" stroke-width="1"/>
<line x1="700.8" y1="201.0" x2="700.8" y2="205.0" stroke="#c8ccce" stroke-opacity="0.36" stroke-width="1"/>
<line x1="718.2" y1="201.0" x2="718.2" y2="203.5" stroke="#c8ccce" stroke-opacity="0.36" stroke-width="1"/>
<line x1="735.6" y1="201.0" x2="735.6" y2="203.5" stroke="#c8ccce" stroke-opacity="0.36" stroke-width="1"/>
<line x1="753.1" y1="201.0" x2="753.1" y2="203.5" stroke="#c8ccce" stroke-opacity="0.36" stroke-width="1"/>
<line x1="770.5" y1="201.0" x2="770.5" y2="203.5" stroke="#c8ccce" stroke-opacity="0.36" stroke-width="1"/>
<line x1="787.9" y1="201.0" x2="787.9" y2="205.0" stroke="#c8ccce" stroke-opacity="0.36" stroke-width="1"/>
<line x1="805.3" y1="201.0" x2="805.3" y2="203.5" stroke="#c8ccce" stroke-opacity="0.36" stroke-width="1"/>
<line x1="822.7" y1="201.0" x2="822.7" y2="203.5" stroke="#c8ccce" stroke-opacity="0.36" stroke-width="1"/>
<line x1="840.2" y1="201.0" x2="840.2" y2="203.5" stroke="#c8ccce" stroke-opacity="0.36" stroke-width="1"/>
<line x1="857.6" y1="201.0" x2="857.6" y2="203.5" stroke="#c8ccce" stroke-opacity="0.36" stroke-width="1"/>
<line x1="875.0" y1="201.0" x2="875.0" y2="205.0" stroke="#c8ccce" stroke-opacity="0.36" stroke-width="1"/>
<line x1="4.0" y1="495.0" x2="4.0" y2="491.0" stroke="#c8ccce" stroke-opacity="0.36" stroke-width="1"/>
<line x1="21.4" y1="495.0" x2="21.4" y2="492.5" stroke="#c8ccce" stroke-opacity="0.36" stroke-width="1"/>
<line x1="38.8" y1="495.0" x2="38.8" y2="492.5" stroke="#c8ccce" stroke-opacity="0.36" stroke-width="1"/>
<line x1="56.3" y1="495.0" x2="56.3" y2="492.5" stroke="#c8ccce" stroke-opacity="0.36" stroke-width="1"/>
<line x1="73.7" y1="495.0" x2="73.7" y2="492.5" stroke="#c8ccce" stroke-opacity="0.36" stroke-width="1"/>
<line x1="91.1" y1="495.0" x2="91.1" y2="491.0" stroke="#c8ccce" stroke-opacity="0.36" stroke-width="1"/>
<line x1="108.5" y1="495.0" x2="108.5" y2="492.5" stroke="#c8ccce" stroke-opacity="0.36" stroke-width="1"/>
<line x1="125.9" y1="495.0" x2="125.9" y2="492.5" stroke="#c8ccce" stroke-opacity="0.36" stroke-width="1"/>
<line x1="143.4" y1="495.0" x2="143.4" y2="492.5" stroke="#c8ccce" stroke-opacity="0.36" stroke-width="1"/>
<line x1="160.8" y1="495.0" x2="160.8" y2="492.5" stroke="#c8ccce" stroke-opacity="0.36" stroke-width="1"/>
<line x1="178.2" y1="495.0" x2="178.2" y2="491.0" stroke="#c8ccce" stroke-opacity="0.36" stroke-width="1"/>
<line x1="195.6" y1="495.0" x2="195.6" y2="492.5" stroke="#c8ccce" stroke-opacity="0.36" stroke-width="1"/>
<line x1="213.0" y1="495.0" x2="213.0" y2="492.5" stroke="#c8ccce" stroke-opacity="0.36" stroke-width="1"/>
<line x1="230.5" y1="495.0" x2="230.5" y2="492.5" stroke="#c8ccce" stroke-opacity="0.36" stroke-width="1"/>
<line x1="247.9" y1="495.0" x2="247.9" y2="492.5" stroke="#c8ccce" stroke-opacity="0.36" stroke-width="1"/>
<line x1="265.3" y1="495.0" x2="265.3" y2="491.0" stroke="#c8ccce" stroke-opacity="0.36" stroke-width="1"/>
<line x1="282.7" y1="495.0" x2="282.7" y2="492.5" stroke="#c8ccce" stroke-opacity="0.36" stroke-width="1"/>
<line x1="300.1" y1="495.0" x2="300.1" y2="492.5" stroke="#c8ccce" stroke-opacity="0.36" stroke-width="1"/>
<line x1="317.6" y1="495.0" x2="317.6" y2="492.5" stroke="#c8ccce" stroke-opacity="0.36" stroke-width="1"/>
<line x1="335.0" y1="495.0" x2="335.0" y2="492.5" stroke="#c8ccce" stroke-opacity="0.36" stroke-width="1"/>
<line x1="352.4" y1="495.0" x2="352.4" y2="491.0" stroke="#c8ccce" stroke-opacity="0.36" stroke-width="1"/>
<line x1="369.8" y1="495.0" x2="369.8" y2="492.5" stroke="#c8ccce" stroke-opacity="0.36" stroke-width="1"/>
<line x1="387.2" y1="495.0" x2="387.2" y2="492.5" stroke="#c8ccce" stroke-opacity="0.36" stroke-width="1"/>
<line x1="404.7" y1="495.0" x2="404.7" y2="492.5" stroke="#c8ccce" stroke-opacity="0.36" stroke-width="1"/>
<line x1="422.1" y1="495.0" x2="422.1" y2="492.5" stroke="#c8ccce" stroke-opacity="0.36" stroke-width="1"/>
<line x1="439.5" y1="495.0" x2="439.5" y2="491.0" stroke="#c8ccce" stroke-opacity="0.36" stroke-width="1"/>
<line x1="456.9" y1="495.0" x2="456.9" y2="492.5" stroke="#c8ccce" stroke-opacity="0.36" stroke-width="1"/>
<line x1="474.3" y1="495.0" x2="474.3" y2="492.5" stroke="#c8ccce" stroke-opacity="0.36" stroke-width="1"/>
<line x1="491.8" y1="495.0" x2="491.8" y2="492.5" stroke="#c8ccce" stroke-opacity="0.36" stroke-width="1"/>
<line x1="509.2" y1="495.0" x2="509.2" y2="492.5" stroke="#c8ccce" stroke-opacity="0.36" stroke-width="1"/>
<line x1="526.6" y1="495.0" x2="526.6" y2="491.0" stroke="#c8ccce" stroke-opacity="0.36" stroke-width="1"/>
<line x1="544.0" y1="495.0" x2="544.0" y2="492.5" stroke="#c8ccce" stroke-opacity="0.36" stroke-width="1"/>
<line x1="561.4" y1="495.0" x2="561.4" y2="492.5" stroke="#c8ccce" stroke-opacity="0.36" stroke-width="1"/>
<line x1="578.9" y1="495.0" x2="578.9" y2="492.5" stroke="#c8ccce" stroke-opacity="0.36" stroke-width="1"/>
<line x1="596.3" y1="495.0" x2="596.3" y2="492.5" stroke="#c8ccce" stroke-opacity="0.36" stroke-width="1"/>
<line x1="613.7" y1="495.0" x2="613.7" y2="491.0" stroke="#c8ccce" stroke-opacity="0.36" stroke-width="1"/>
<line x1="631.1" y1="495.0" x2="631.1" y2="492.5" stroke="#c8ccce" stroke-opacity="0.36" stroke-width="1"/>
<line x1="648.5" y1="495.0" x2="648.5" y2="492.5" stroke="#c8ccce" stroke-opacity="0.36" stroke-width="1"/>
<line x1="666.0" y1="495.0" x2="666.0" y2="492.5" stroke="#c8ccce" stroke-opacity="0.36" stroke-width="1"/>
<line x1="683.4" y1="495.0" x2="683.4" y2="492.5" stroke="#c8ccce" stroke-opacity="0.36" stroke-width="1"/>
<line x1="700.8" y1="495.0" x2="700.8" y2="491.0" stroke="#c8ccce" stroke-opacity="0.36" stroke-width="1"/>
<line x1="718.2" y1="495.0" x2="718.2" y2="492.5" stroke="#c8ccce" stroke-opacity="0.36" stroke-width="1"/>
<line x1="735.6" y1="495.0" x2="735.6" y2="492.5" stroke="#c8ccce" stroke-opacity="0.36" stroke-width="1"/>
<line x1="753.1" y1="495.0" x2="753.1" y2="492.5" stroke="#c8ccce" stroke-opacity="0.36" stroke-width="1"/>
<line x1="770.5" y1="495.0" x2="770.5" y2="492.5" stroke="#c8ccce" stroke-opacity="0.36" stroke-width="1"/>
<line x1="787.9" y1="495.0" x2="787.9" y2="491.0" stroke="#c8ccce" stroke-opacity="0.36" stroke-width="1"/>
<line x1="805.3" y1="495.0" x2="805.3" y2="492.5" stroke="#c8ccce" stroke-opacity="0.36" stroke-width="1"/>
<line x1="822.7" y1="495.0" x2="822.7" y2="492.5" stroke="#c8ccce" stroke-opacity="0.36" stroke-width="1"/>
<line x1="840.2" y1="495.0" x2="840.2" y2="492.5" stroke="#c8ccce" stroke-opacity="0.36" stroke-width="1"/>
<line x1="857.6" y1="495.0" x2="857.6" y2="492.5" stroke="#c8ccce" stroke-opacity="0.36" stroke-width="1"/>
<line x1="875.0" y1="495.0" x2="875.0" y2="491.0" stroke="#c8ccce" stroke-opacity="0.36" stroke-width="1"/>
<line x1="4.0" y1="201.0" x2="8.0" y2="201.0" stroke="#c8ccce" stroke-opacity="0.45" stroke-width="1"/>
<line x1="875.0" y1="201.0" x2="871.0" y2="201.0" stroke="#c8ccce" stroke-opacity="0.45" stroke-width="1"/>
<line x1="4.0" y1="208.3" x2="6.2" y2="208.3" stroke="#c8ccce" stroke-opacity="0.45" stroke-width="1"/>
<line x1="875.0" y1="208.3" x2="872.8" y2="208.3" stroke="#c8ccce" stroke-opacity="0.45" stroke-width="1"/>
<line x1="4.0" y1="215.7" x2="6.2" y2="215.7" stroke="#c8ccce" stroke-opacity="0.45" stroke-width="1"/>
<line x1="875.0" y1="215.7" x2="872.8" y2="215.7" stroke="#c8ccce" stroke-opacity="0.45" stroke-width="1"/>
<line x1="4.0" y1="223.1" x2="6.2" y2="223.1" stroke="#c8ccce" stroke-opacity="0.45" stroke-width="1"/>
<line x1="875.0" y1="223.1" x2="872.8" y2="223.1" stroke="#c8ccce" stroke-opacity="0.45" stroke-width="1"/>
<line x1="4.0" y1="230.4" x2="6.2" y2="230.4" stroke="#c8ccce" stroke-opacity="0.45" stroke-width="1"/>
<line x1="875.0" y1="230.4" x2="872.8" y2="230.4" stroke="#c8ccce" stroke-opacity="0.45" stroke-width="1"/>
<line x1="4.0" y1="237.8" x2="8.0" y2="237.8" stroke="#c8ccce" stroke-opacity="0.45" stroke-width="1"/>
<line x1="875.0" y1="237.8" x2="871.0" y2="237.8" stroke="#c8ccce" stroke-opacity="0.45" stroke-width="1"/>
<line x1="4.0" y1="245.1" x2="6.2" y2="245.1" stroke="#c8ccce" stroke-opacity="0.45" stroke-width="1"/>
<line x1="875.0" y1="245.1" x2="872.8" y2="245.1" stroke="#c8ccce" stroke-opacity="0.45" stroke-width="1"/>
<line x1="4.0" y1="252.4" x2="6.2" y2="252.4" stroke="#c8ccce" stroke-opacity="0.45" stroke-width="1"/>
<line x1="875.0" y1="252.4" x2="872.8" y2="252.4" stroke="#c8ccce" stroke-opacity="0.45" stroke-width="1"/>
<line x1="4.0" y1="259.8" x2="6.2" y2="259.8" stroke="#c8ccce" stroke-opacity="0.45" stroke-width="1"/>
<line x1="875.0" y1="259.8" x2="872.8" y2="259.8" stroke="#c8ccce" stroke-opacity="0.45" stroke-width="1"/>
<line x1="4.0" y1="267.1" x2="6.2" y2="267.1" stroke="#c8ccce" stroke-opacity="0.45" stroke-width="1"/>
<line x1="875.0" y1="267.1" x2="872.8" y2="267.1" stroke="#c8ccce" stroke-opacity="0.45" stroke-width="1"/>
<line x1="4.0" y1="274.5" x2="8.0" y2="274.5" stroke="#c8ccce" stroke-opacity="0.45" stroke-width="1"/>
<line x1="875.0" y1="274.5" x2="871.0" y2="274.5" stroke="#c8ccce" stroke-opacity="0.45" stroke-width="1"/>
<line x1="4.0" y1="281.9" x2="6.2" y2="281.9" stroke="#c8ccce" stroke-opacity="0.45" stroke-width="1"/>
<line x1="875.0" y1="281.9" x2="872.8" y2="281.9" stroke="#c8ccce" stroke-opacity="0.45" stroke-width="1"/>
<line x1="4.0" y1="289.2" x2="6.2" y2="289.2" stroke="#c8ccce" stroke-opacity="0.45" stroke-width="1"/>
<line x1="875.0" y1="289.2" x2="872.8" y2="289.2" stroke="#c8ccce" stroke-opacity="0.45" stroke-width="1"/>
<line x1="4.0" y1="296.6" x2="6.2" y2="296.6" stroke="#c8ccce" stroke-opacity="0.45" stroke-width="1"/>
<line x1="875.0" y1="296.6" x2="872.8" y2="296.6" stroke="#c8ccce" stroke-opacity="0.45" stroke-width="1"/>
<line x1="4.0" y1="303.9" x2="6.2" y2="303.9" stroke="#c8ccce" stroke-opacity="0.45" stroke-width="1"/>
<line x1="875.0" y1="303.9" x2="872.8" y2="303.9" stroke="#c8ccce" stroke-opacity="0.45" stroke-width="1"/>
<line x1="4.0" y1="311.2" x2="8.0" y2="311.2" stroke="#c8ccce" stroke-opacity="0.45" stroke-width="1"/>
<line x1="875.0" y1="311.2" x2="871.0" y2="311.2" stroke="#c8ccce" stroke-opacity="0.45" stroke-width="1"/>
<line x1="4.0" y1="318.6" x2="6.2" y2="318.6" stroke="#c8ccce" stroke-opacity="0.45" stroke-width="1"/>
<line x1="875.0" y1="318.6" x2="872.8" y2="318.6" stroke="#c8ccce" stroke-opacity="0.45" stroke-width="1"/>
<line x1="4.0" y1="325.9" x2="6.2" y2="325.9" stroke="#c8ccce" stroke-opacity="0.45" stroke-width="1"/>
<line x1="875.0" y1="325.9" x2="872.8" y2="325.9" stroke="#c8ccce" stroke-opacity="0.45" stroke-width="1"/>
<line x1="4.0" y1="333.3" x2="6.2" y2="333.3" stroke="#c8ccce" stroke-opacity="0.45" stroke-width="1"/>
<line x1="875.0" y1="333.3" x2="872.8" y2="333.3" stroke="#c8ccce" stroke-opacity="0.45" stroke-width="1"/>
<line x1="4.0" y1="340.6" x2="6.2" y2="340.6" stroke="#c8ccce" stroke-opacity="0.45" stroke-width="1"/>
<line x1="875.0" y1="340.6" x2="872.8" y2="340.6" stroke="#c8ccce" stroke-opacity="0.45" stroke-width="1"/>
<line x1="4.0" y1="348.0" x2="8.0" y2="348.0" stroke="#c8ccce" stroke-opacity="0.45" stroke-width="1"/>
<line x1="875.0" y1="348.0" x2="871.0" y2="348.0" stroke="#c8ccce" stroke-opacity="0.45" stroke-width="1"/>
<line x1="4.0" y1="355.4" x2="6.2" y2="355.4" stroke="#c8ccce" stroke-opacity="0.45" stroke-width="1"/>
<line x1="875.0" y1="355.4" x2="872.8" y2="355.4" stroke="#c8ccce" stroke-opacity="0.45" stroke-width="1"/>
<line x1="4.0" y1="362.7" x2="6.2" y2="362.7" stroke="#c8ccce" stroke-opacity="0.45" stroke-width="1"/>
<line x1="875.0" y1="362.7" x2="872.8" y2="362.7" stroke="#c8ccce" stroke-opacity="0.45" stroke-width="1"/>
<line x1="4.0" y1="370.1" x2="6.2" y2="370.1" stroke="#c8ccce" stroke-opacity="0.45" stroke-width="1"/>
<line x1="875.0" y1="370.1" x2="872.8" y2="370.1" stroke="#c8ccce" stroke-opacity="0.45" stroke-width="1"/>
<line x1="4.0" y1="377.4" x2="6.2" y2="377.4" stroke="#c8ccce" stroke-opacity="0.45" stroke-width="1"/>
<line x1="875.0" y1="377.4" x2="872.8" y2="377.4" stroke="#c8ccce" stroke-opacity="0.45" stroke-width="1"/>
<line x1="4.0" y1="384.8" x2="8.0" y2="384.8" stroke="#c8ccce" stroke-opacity="0.45" stroke-width="1"/>
<line x1="875.0" y1="384.8" x2="871.0" y2="384.8" stroke="#c8ccce" stroke-opacity="0.45" stroke-width="1"/>
<line x1="4.0" y1="392.1" x2="6.2" y2="392.1" stroke="#c8ccce" stroke-opacity="0.45" stroke-width="1"/>
<line x1="875.0" y1="392.1" x2="872.8" y2="392.1" stroke="#c8ccce" stroke-opacity="0.45" stroke-width="1"/>
<line x1="4.0" y1="399.4" x2="6.2" y2="399.4" stroke="#c8ccce" stroke-opacity="0.45" stroke-width="1"/>
<line x1="875.0" y1="399.4" x2="872.8" y2="399.4" stroke="#c8ccce" stroke-opacity="0.45" stroke-width="1"/>
<line x1="4.0" y1="406.8" x2="6.2" y2="406.8" stroke="#c8ccce" stroke-opacity="0.45" stroke-width="1"/>
<line x1="875.0" y1="406.8" x2="872.8" y2="406.8" stroke="#c8ccce" stroke-opacity="0.45" stroke-width="1"/>
<line x1="4.0" y1="414.1" x2="6.2" y2="414.1" stroke="#c8ccce" stroke-opacity="0.45" stroke-width="1"/>
<line x1="875.0" y1="414.1" x2="872.8" y2="414.1" stroke="#c8ccce" stroke-opacity="0.45" stroke-width="1"/>
<line x1="4.0" y1="421.5" x2="8.0" y2="421.5" stroke="#c8ccce" stroke-opacity="0.45" stroke-width="1"/>
<line x1="875.0" y1="421.5" x2="871.0" y2="421.5" stroke="#c8ccce" stroke-opacity="0.45" stroke-width="1"/>
<line x1="4.0" y1="428.9" x2="6.2" y2="428.9" stroke="#c8ccce" stroke-opacity="0.45" stroke-width="1"/>
<line x1="875.0" y1="428.9" x2="872.8" y2="428.9" stroke="#c8ccce" stroke-opacity="0.45" stroke-width="1"/>
<line x1="4.0" y1="436.2" x2="6.2" y2="436.2" stroke="#c8ccce" stroke-opacity="0.45" stroke-width="1"/>
<line x1="875.0" y1="436.2" x2="872.8" y2="436.2" stroke="#c8ccce" stroke-opacity="0.45" stroke-width="1"/>
<line x1="4.0" y1="443.6" x2="6.2" y2="443.6" stroke="#c8ccce" stroke-opacity="0.45" stroke-width="1"/>
<line x1="875.0" y1="443.6" x2="872.8" y2="443.6" stroke="#c8ccce" stroke-opacity="0.45" stroke-width="1"/>
<line x1="4.0" y1="450.9" x2="6.2" y2="450.9" stroke="#c8ccce" stroke-opacity="0.45" stroke-width="1"/>
<line x1="875.0" y1="450.9" x2="872.8" y2="450.9" stroke="#c8ccce" stroke-opacity="0.45" stroke-width="1"/>
<line x1="4.0" y1="458.2" x2="8.0" y2="458.2" stroke="#c8ccce" stroke-opacity="0.45" stroke-width="1"/>
<line x1="875.0" y1="458.2" x2="871.0" y2="458.2" stroke="#c8ccce" stroke-opacity="0.45" stroke-width="1"/>
<line x1="4.0" y1="465.6" x2="6.2" y2="465.6" stroke="#c8ccce" stroke-opacity="0.45" stroke-width="1"/>
<line x1="875.0" y1="465.6" x2="872.8" y2="465.6" stroke="#c8ccce" stroke-opacity="0.45" stroke-width="1"/>
<line x1="4.0" y1="472.9" x2="6.2" y2="472.9" stroke="#c8ccce" stroke-opacity="0.45" stroke-width="1"/>
<line x1="875.0" y1="472.9" x2="872.8" y2="472.9" stroke="#c8ccce" stroke-opacity="0.45" stroke-width="1"/>
<line x1="4.0" y1="480.3" x2="6.2" y2="480.3" stroke="#c8ccce" stroke-opacity="0.45" stroke-width="1"/>
<line x1="875.0" y1="480.3" x2="872.8" y2="480.3" stroke="#c8ccce" stroke-opacity="0.45" stroke-width="1"/>
<line x1="4.0" y1="487.6" x2="6.2" y2="487.6" stroke="#c8ccce" stroke-opacity="0.45" stroke-width="1"/>
<line x1="875.0" y1="487.6" x2="872.8" y2="487.6" stroke="#c8ccce" stroke-opacity="0.45" stroke-width="1"/>
<line x1="4.0" y1="495.0" x2="8.0" y2="495.0" stroke="#c8ccce" stroke-opacity="0.45" stroke-width="1"/>
<line x1="875.0" y1="495.0" x2="871.0" y2="495.0" stroke="#c8ccce" stroke-opacity="0.45" stroke-width="1"/>
<text x="870.5" y="461.9" text-anchor="end" font-family="Liberation Sans, sans-serif" font-size="8" fill="#dcd63a">-300mV</text>
<polyline points="366.3,171.50 369.4,171.59 372.5,171.54 375.7,171.61 378.8,171.61 381.9,171.44 385.0,171.43 388.1,171.68 391.2,171.50 394.3,171.50 397.4,171.72 400.5,171.57 403.6,171.68 406.7,171.57 409.8,171.62 412.9,171.47 416.0,171.62 419.1,171.69 422.2,171.58 425.3,171.65 428.4,171.63 431.5,171.44 434.7,171.65 437.8,171.60" fill="none" stroke="#8f8a10" stroke-width="7.0" filter="url(#gl)" stroke-opacity="0.9" transform="translate(0 0.64)"/>
<polyline points="366.3,171.50 369.4,171.59 372.5,171.54 375.7,171.61 378.8,171.61 381.9,171.44 385.0,171.43 388.1,171.68 391.2,171.50 394.3,171.50 397.4,171.72 400.5,171.57 403.6,171.68 406.7,171.57 409.8,171.62 412.9,171.47 416.0,171.62 419.1,171.69 422.2,171.58 425.3,171.65 428.4,171.63 431.5,171.44 434.7,171.65 437.8,171.60" fill="none" stroke="#f2e81a" stroke-width="4.0" filter="url(#gs)" transform="translate(0 -0.24)"/>
<line x1="437.8" y1="171.6" x2="439.9" y2="68.0" stroke="#b8b020" stroke-width="1.0" stroke-opacity="0.9"/>
<polyline points="439.9,67.48 443.1,67.56 446.2,67.91 449.4,67.85 452.5,67.96 455.7,68.03 458.8,68.00 462.0,68.07 465.2,67.91 468.3,68.04 471.5,67.94 474.6,68.08 477.8,68.07 480.9,67.83" fill="none" stroke="#8f8a10" stroke-width="7.0" filter="url(#gl)" stroke-opacity="0.9" transform="translate(0 0.64)"/>
<polyline points="439.9,67.48 443.1,67.56 446.2,67.91 449.4,67.85 452.5,67.96 455.7,68.03 458.8,68.00 462.0,68.07 465.2,67.91 468.3,68.04 471.5,67.94 474.6,68.08 477.8,68.07 480.9,67.83" fill="none" stroke="#f2e81a" stroke-width="4.0" filter="url(#gs)" transform="translate(0 -0.24)"/>
<line x1="480.9" y1="68.0" x2="483.6" y2="171.6" stroke="#b8b020" stroke-width="1.0" stroke-opacity="0.9"/>
<polyline points="483.6,172.46 487.1,172.07 490.6,172.05 494.1,171.75" fill="none" stroke="#8f8a10" stroke-width="7.0" filter="url(#gl)" stroke-opacity="0.9" transform="translate(0 0.64)"/>
<polyline points="483.6,172.46 487.1,172.07 490.6,172.05 494.1,171.75" fill="none" stroke="#f2e81a" stroke-width="4.0" filter="url(#gs)" transform="translate(0 -0.24)"/>
<line x1="494.1" y1="171.6" x2="496.6" y2="68.0" stroke="#b8b020" stroke-width="1.0" stroke-opacity="0.9"/>
<polyline points="496.6,67.58 499.9,67.64 503.1,67.80 506.4,67.83 509.6,67.85 512.9,67.95 516.1,67.96" fill="none" stroke="#8f8a10" stroke-width="7.0" filter="url(#gl)" stroke-opacity="0.9" transform="translate(0 0.64)"/>
<polyline points="496.6,67.58 499.9,67.64 503.1,67.80 506.4,67.83 509.6,67.85 512.9,67.95 516.1,67.96" fill="none" stroke="#f2e81a" stroke-width="4.0" filter="url(#gs)" transform="translate(0 -0.24)"/>
<line x1="516.1" y1="68.0" x2="518.6" y2="171.6" stroke="#b8b020" stroke-width="1.0" stroke-opacity="0.9"/>
<polyline points="518.6,172.69 521.7,171.70 524.9,171.71 528.0,171.68 531.1,171.72 534.2,171.63 537.3,171.47 540.4,171.68 543.6,171.71 546.7,171.70 549.8,171.60 552.9,171.64 556.0,171.49 559.2,171.67 562.3,171.60 565.4,171.51 568.5,171.44 571.6,171.68 574.7,171.72 577.9,171.45 581.0,171.67 584.1,171.55" fill="none" stroke="#8f8a10" stroke-width="7.0" filter="url(#gl)" stroke-opacity="0.9" transform="translate(0 0.64)"/>
<polyline points="518.6,172.69 521.7,171.70 524.9,171.71 528.0,171.68 531.1,171.72 534.2,171.63 537.3,171.47 540.4,171.68 543.6,171.71 546.7,171.70 549.8,171.60 552.9,171.64 556.0,171.49 559.2,171.67 562.3,171.60 565.4,171.51 568.5,171.44 571.6,171.68 574.7,171.72 577.9,171.45 581.0,171.67 584.1,171.55" fill="none" stroke="#f2e81a" stroke-width="4.0" filter="url(#gs)" transform="translate(0 -0.24)"/>
<rect x="4.0" y="53.0" width="362.3" height="132.0" fill="#2e5fac"/>
<rect x="584.1" y="53.0" width="290.9" height="132.0" fill="#2e5fac"/>
<line x1="91.1" y1="53.0" x2="91.1" y2="185.0" stroke="#5f8fd8" stroke-opacity="0.10" stroke-width="1"/>
<line x1="178.2" y1="53.0" x2="178.2" y2="185.0" stroke="#5f8fd8" stroke-opacity="0.10" stroke-width="1"/>
<line x1="265.3" y1="53.0" x2="265.3" y2="185.0" stroke="#5f8fd8" stroke-opacity="0.10" stroke-width="1"/>
<line x1="352.4" y1="53.0" x2="352.4" y2="185.0" stroke="#5f8fd8" stroke-opacity="0.10" stroke-width="1"/>
<line x1="613.7" y1="53.0" x2="613.7" y2="185.0" stroke="#5f8fd8" stroke-opacity="0.10" stroke-width="1"/>
<line x1="700.8" y1="53.0" x2="700.8" y2="185.0" stroke="#5f8fd8" stroke-opacity="0.10" stroke-width="1"/>
<line x1="787.9" y1="53.0" x2="787.9" y2="185.0" stroke="#5f8fd8" stroke-opacity="0.10" stroke-width="1"/>
<line x1="4.0" y1="69.5" x2="366.3" y2="69.5" stroke="#5f8fd8" stroke-opacity="0.07" stroke-width="1"/>
<line x1="584.1" y1="69.5" x2="875.0" y2="69.5" stroke="#5f8fd8" stroke-opacity="0.10" stroke-width="1"/>
<line x1="4.0" y1="86.0" x2="366.3" y2="86.0" stroke="#5f8fd8" stroke-opacity="0.07" stroke-width="1"/>
<line x1="584.1" y1="86.0" x2="875.0" y2="86.0" stroke="#5f8fd8" stroke-opacity="0.10" stroke-width="1"/>
<line x1="4.0" y1="102.5" x2="366.3" y2="102.5" stroke="#5f8fd8" stroke-opacity="0.07" stroke-width="1"/>
<line x1="584.1" y1="102.5" x2="875.0" y2="102.5" stroke="#5f8fd8" stroke-opacity="0.10" stroke-width="1"/>
<line x1="4.0" y1="119.0" x2="366.3" y2="119.0" stroke="#5f8fd8" stroke-opacity="0.07" stroke-width="1"/>
<line x1="584.1" y1="119.0" x2="875.0" y2="119.0" stroke="#5f8fd8" stroke-opacity="0.10" stroke-width="1"/>
<line x1="4.0" y1="135.5" x2="366.3" y2="135.5" stroke="#5f8fd8" stroke-opacity="0.07" stroke-width="1"/>
<line x1="584.1" y1="135.5" x2="875.0" y2="135.5" stroke="#5f8fd8" stroke-opacity="0.10" stroke-width="1"/>
<line x1="4.0" y1="152.0" x2="366.3" y2="152.0" stroke="#5f8fd8" stroke-opacity="0.07" stroke-width="1"/>
<line x1="584.1" y1="152.0" x2="875.0" y2="152.0" stroke="#5f8fd8" stroke-opacity="0.10" stroke-width="1"/>
<line x1="4.0" y1="168.5" x2="366.3" y2="168.5" stroke="#5f8fd8" stroke-opacity="0.07" stroke-width="1"/>
<line x1="584.1" y1="168.5" x2="875.0" y2="168.5" stroke="#5f8fd8" stroke-opacity="0.10" stroke-width="1"/>
<text x="870" y="172.6" text-anchor="end" font-family="Liberation Sans, sans-serif" font-size="8" fill="#5283cc">-300mV</text>
<line x1="4.0" y1="171.6" x2="366.3" y2="171.6" stroke="#5391d2" stroke-width="4.6" filter="url(#gs)"/>
<line x1="584.1" y1="171.6" x2="875.0" y2="171.6" stroke="#5391d2" stroke-width="4.6" filter="url(#gs)"/>
<line x1="4.0" y1="53.0" x2="4.0" y2="57.0" stroke="#cfe0f5" stroke-opacity="0.2" stroke-width="1"/>
<line x1="4.0" y1="185.0" x2="4.0" y2="181.0" stroke="#cfe0f5" stroke-opacity="0.2" stroke-width="1"/>
<line x1="21.4" y1="53.0" x2="21.4" y2="55.5" stroke="#cfe0f5" stroke-opacity="0.2" stroke-width="1"/>
<line x1="21.4" y1="185.0" x2="21.4" y2="182.5" stroke="#cfe0f5" stroke-opacity="0.2" stroke-width="1"/>
<line x1="38.8" y1="53.0" x2="38.8" y2="55.5" stroke="#cfe0f5" stroke-opacity="0.2" stroke-width="1"/>
<line x1="38.8" y1="185.0" x2="38.8" y2="182.5" stroke="#cfe0f5" stroke-opacity="0.2" stroke-width="1"/>
<line x1="56.3" y1="53.0" x2="56.3" y2="55.5" stroke="#cfe0f5" stroke-opacity="0.2" stroke-width="1"/>
<line x1="56.3" y1="185.0" x2="56.3" y2="182.5" stroke="#cfe0f5" stroke-opacity="0.2" stroke-width="1"/>
<line x1="73.7" y1="53.0" x2="73.7" y2="55.5" stroke="#cfe0f5" stroke-opacity="0.2" stroke-width="1"/>
<line x1="73.7" y1="185.0" x2="73.7" y2="182.5" stroke="#cfe0f5" stroke-opacity="0.2" stroke-width="1"/>
<line x1="91.1" y1="53.0" x2="91.1" y2="57.0" stroke="#cfe0f5" stroke-opacity="0.2" stroke-width="1"/>
<line x1="91.1" y1="185.0" x2="91.1" y2="181.0" stroke="#cfe0f5" stroke-opacity="0.2" stroke-width="1"/>
<line x1="108.5" y1="53.0" x2="108.5" y2="55.5" stroke="#cfe0f5" stroke-opacity="0.2" stroke-width="1"/>
<line x1="108.5" y1="185.0" x2="108.5" y2="182.5" stroke="#cfe0f5" stroke-opacity="0.2" stroke-width="1"/>
<line x1="125.9" y1="53.0" x2="125.9" y2="55.5" stroke="#cfe0f5" stroke-opacity="0.2" stroke-width="1"/>
<line x1="125.9" y1="185.0" x2="125.9" y2="182.5" stroke="#cfe0f5" stroke-opacity="0.2" stroke-width="1"/>
<line x1="143.4" y1="53.0" x2="143.4" y2="55.5" stroke="#cfe0f5" stroke-opacity="0.2" stroke-width="1"/>
<line x1="143.4" y1="185.0" x2="143.4" y2="182.5" stroke="#cfe0f5" stroke-opacity="0.2" stroke-width="1"/>
<line x1="160.8" y1="53.0" x2="160.8" y2="55.5" stroke="#cfe0f5" stroke-opacity="0.2" stroke-width="1"/>
<line x1="160.8" y1="185.0" x2="160.8" y2="182.5" stroke="#cfe0f5" stroke-opacity="0.2" stroke-width="1"/>
<line x1="178.2" y1="53.0" x2="178.2" y2="57.0" stroke="#cfe0f5" stroke-opacity="0.2" stroke-width="1"/>
<line x1="178.2" y1="185.0" x2="178.2" y2="181.0" stroke="#cfe0f5" stroke-opacity="0.2" stroke-width="1"/>
<line x1="195.6" y1="53.0" x2="195.6" y2="55.5" stroke="#cfe0f5" stroke-opacity="0.2" stroke-width="1"/>
<line x1="195.6" y1="185.0" x2="195.6" y2="182.5" stroke="#cfe0f5" stroke-opacity="0.2" stroke-width="1"/>
<line x1="213.0" y1="53.0" x2="213.0" y2="55.5" stroke="#cfe0f5" stroke-opacity="0.2" stroke-width="1"/>
<line x1="213.0" y1="185.0" x2="213.0" y2="182.5" stroke="#cfe0f5" stroke-opacity="0.2" stroke-width="1"/>
<line x1="230.5" y1="53.0" x2="230.5" y2="55.5" stroke="#cfe0f5" stroke-opacity="0.2" stroke-width="1"/>
<line x1="230.5" y1="185.0" x2="230.5" y2="182.5" stroke="#cfe0f5" stroke-opacity="0.2" stroke-width="1"/>
<line x1="247.9" y1="53.0" x2="247.9" y2="55.5" stroke="#cfe0f5" stroke-opacity="0.2" stroke-width="1"/>
<line x1="247.9" y1="185.0" x2="247.9" y2="182.5" stroke="#cfe0f5" stroke-opacity="0.2" stroke-width="1"/>
<line x1="265.3" y1="53.0" x2="265.3" y2="57.0" stroke="#cfe0f5" stroke-opacity="0.2" stroke-width="1"/>
<line x1="265.3" y1="185.0" x2="265.3" y2="181.0" stroke="#cfe0f5" stroke-opacity="0.2" stroke-width="1"/>
<line x1="282.7" y1="53.0" x2="282.7" y2="55.5" stroke="#cfe0f5" stroke-opacity="0.2" stroke-width="1"/>
<line x1="282.7" y1="185.0" x2="282.7" y2="182.5" stroke="#cfe0f5" stroke-opacity="0.2" stroke-width="1"/>
<line x1="300.1" y1="53.0" x2="300.1" y2="55.5" stroke="#cfe0f5" stroke-opacity="0.2" stroke-width="1"/>
<line x1="300.1" y1="185.0" x2="300.1" y2="182.5" stroke="#cfe0f5" stroke-opacity="0.2" stroke-width="1"/>
<line x1="317.6" y1="53.0" x2="317.6" y2="55.5" stroke="#cfe0f5" stroke-opacity="0.2" stroke-width="1"/>
<line x1="317.6" y1="185.0" x2="317.6" y2="182.5" stroke="#cfe0f5" stroke-opacity="0.2" stroke-width="1"/>
<line x1="335.0" y1="53.0" x2="335.0" y2="55.5" stroke="#cfe0f5" stroke-opacity="0.2" stroke-width="1"/>
<line x1="335.0" y1="185.0" x2="335.0" y2="182.5" stroke="#cfe0f5" stroke-opacity="0.2" stroke-width="1"/>
<line x1="352.4" y1="53.0" x2="352.4" y2="57.0" stroke="#cfe0f5" stroke-opacity="0.2" stroke-width="1"/>
<line x1="352.4" y1="185.0" x2="352.4" y2="181.0" stroke="#cfe0f5" stroke-opacity="0.2" stroke-width="1"/>
<line x1="369.8" y1="53.0" x2="369.8" y2="55.5" stroke="#cfe0f5" stroke-opacity="0.2" stroke-width="1"/>
<line x1="369.8" y1="185.0" x2="369.8" y2="182.5" stroke="#cfe0f5" stroke-opacity="0.2" stroke-width="1"/>
<line x1="387.2" y1="53.0" x2="387.2" y2="55.5" stroke="#cfe0f5" stroke-opacity="0.2" stroke-width="1"/>
<line x1="387.2" y1="185.0" x2="387.2" y2="182.5" stroke="#cfe0f5" stroke-opacity="0.2" stroke-width="1"/>
<line x1="404.7" y1="53.0" x2="404.7" y2="55.5" stroke="#cfe0f5" stroke-opacity="0.2" stroke-width="1"/>
<line x1="404.7" y1="185.0" x2="404.7" y2="182.5" stroke="#cfe0f5" stroke-opacity="0.2" stroke-width="1"/>
<line x1="422.1" y1="53.0" x2="422.1" y2="55.5" stroke="#cfe0f5" stroke-opacity="0.2" stroke-width="1"/>
<line x1="422.1" y1="185.0" x2="422.1" y2="182.5" stroke="#cfe0f5" stroke-opacity="0.2" stroke-width="1"/>
<line x1="439.5" y1="53.0" x2="439.5" y2="57.0" stroke="#cfe0f5" stroke-opacity="0.2" stroke-width="1"/>
<line x1="439.5" y1="185.0" x2="439.5" y2="181.0" stroke="#cfe0f5" stroke-opacity="0.2" stroke-width="1"/>
<line x1="456.9" y1="53.0" x2="456.9" y2="55.5" stroke="#cfe0f5" stroke-opacity="0.2" stroke-width="1"/>
<line x1="456.9" y1="185.0" x2="456.9" y2="182.5" stroke="#cfe0f5" stroke-opacity="0.2" stroke-width="1"/>
<line x1="474.3" y1="53.0" x2="474.3" y2="55.5" stroke="#cfe0f5" stroke-opacity="0.2" stroke-width="1"/>
<line x1="474.3" y1="185.0" x2="474.3" y2="182.5" stroke="#cfe0f5" stroke-opacity="0.2" stroke-width="1"/>
<line x1="491.8" y1="53.0" x2="491.8" y2="55.5" stroke="#cfe0f5" stroke-opacity="0.2" stroke-width="1"/>
<line x1="491.8" y1="185.0" x2="491.8" y2="182.5" stroke="#cfe0f5" stroke-opacity="0.2" stroke-width="1"/>
<line x1="509.2" y1="53.0" x2="509.2" y2="55.5" stroke="#cfe0f5" stroke-opacity="0.2" stroke-width="1"/>
<line x1="509.2" y1="185.0" x2="509.2" y2="182.5" stroke="#cfe0f5" stroke-opacity="0.2" stroke-width="1"/>
<line x1="526.6" y1="53.0" x2="526.6" y2="57.0" stroke="#cfe0f5" stroke-opacity="0.2" stroke-width="1"/>
<line x1="526.6" y1="185.0" x2="526.6" y2="181.0" stroke="#cfe0f5" stroke-opacity="0.2" stroke-width="1"/>
<line x1="544.0" y1="53.0" x2="544.0" y2="55.5" stroke="#cfe0f5" stroke-opacity="0.2" stroke-width="1"/>
<line x1="544.0" y1="185.0" x2="544.0" y2="182.5" stroke="#cfe0f5" stroke-opacity="0.2" stroke-width="1"/>
<line x1="561.4" y1="53.0" x2="561.4" y2="55.5" stroke="#cfe0f5" stroke-opacity="0.2" stroke-width="1"/>
<line x1="561.4" y1="185.0" x2="561.4" y2="182.5" stroke="#cfe0f5" stroke-opacity="0.2" stroke-width="1"/>
<line x1="578.9" y1="53.0" x2="578.9" y2="55.5" stroke="#cfe0f5" stroke-opacity="0.2" stroke-width="1"/>
<line x1="578.9" y1="185.0" x2="578.9" y2="182.5" stroke="#cfe0f5" stroke-opacity="0.2" stroke-width="1"/>
<line x1="596.3" y1="53.0" x2="596.3" y2="55.5" stroke="#cfe0f5" stroke-opacity="0.2" stroke-width="1"/>
<line x1="596.3" y1="185.0" x2="596.3" y2="182.5" stroke="#cfe0f5" stroke-opacity="0.2" stroke-width="1"/>
<line x1="613.7" y1="53.0" x2="613.7" y2="57.0" stroke="#cfe0f5" stroke-opacity="0.2" stroke-width="1"/>
<line x1="613.7" y1="185.0" x2="613.7" y2="181.0" stroke="#cfe0f5" stroke-opacity="0.2" stroke-width="1"/>
<line x1="631.1" y1="53.0" x2="631.1" y2="55.5" stroke="#cfe0f5" stroke-opacity="0.2" stroke-width="1"/>
<line x1="631.1" y1="185.0" x2="631.1" y2="182.5" stroke="#cfe0f5" stroke-opacity="0.2" stroke-width="1"/>
<line x1="648.5" y1="53.0" x2="648.5" y2="55.5" stroke="#cfe0f5" stroke-opacity="0.2" stroke-width="1"/>
<line x1="648.5" y1="185.0" x2="648.5" y2="182.5" stroke="#cfe0f5" stroke-opacity="0.2" stroke-width="1"/>
<line x1="666.0" y1="53.0" x2="666.0" y2="55.5" stroke="#cfe0f5" stroke-opacity="0.2" stroke-width="1"/>
<line x1="666.0" y1="185.0" x2="666.0" y2="182.5" stroke="#cfe0f5" stroke-opacity="0.2" stroke-width="1"/>
<line x1="683.4" y1="53.0" x2="683.4" y2="55.5" stroke="#cfe0f5" stroke-opacity="0.2" stroke-width="1"/>
<line x1="683.4" y1="185.0" x2="683.4" y2="182.5" stroke="#cfe0f5" stroke-opacity="0.2" stroke-width="1"/>
<line x1="700.8" y1="53.0" x2="700.8" y2="57.0" stroke="#cfe0f5" stroke-opacity="0.2" stroke-width="1"/>
<line x1="700.8" y1="185.0" x2="700.8" y2="181.0" stroke="#cfe0f5" stroke-opacity="0.2" stroke-width="1"/>
<line x1="718.2" y1="53.0" x2="718.2" y2="55.5" stroke="#cfe0f5" stroke-opacity="0.2" stroke-width="1"/>
<line x1="718.2" y1="185.0" x2="718.2" y2="182.5" stroke="#cfe0f5" stroke-opacity="0.2" stroke-width="1"/>
<line x1="735.6" y1="53.0" x2="735.6" y2="55.5" stroke="#cfe0f5" stroke-opacity="0.2" stroke-width="1"/>
<line x1="735.6" y1="185.0" x2="735.6" y2="182.5" stroke="#cfe0f5" stroke-opacity="0.2" stroke-width="1"/>
<line x1="753.1" y1="53.0" x2="753.1" y2="55.5" stroke="#cfe0f5" stroke-opacity="0.2" stroke-width="1"/>
<line x1="753.1" y1="185.0" x2="753.1" y2="182.5" stroke="#cfe0f5" stroke-opacity="0.2" stroke-width="1"/>
<line x1="770.5" y1="53.0" x2="770.5" y2="55.5" stroke="#cfe0f5" stroke-opacity="0.2" stroke-width="1"/>
<line x1="770.5" y1="185.0" x2="770.5" y2="182.5" stroke="#cfe0f5" stroke-opacity="0.2" stroke-width="1"/>
<line x1="787.9" y1="53.0" x2="787.9" y2="57.0" stroke="#cfe0f5" stroke-opacity="0.2" stroke-width="1"/>
<line x1="787.9" y1="185.0" x2="787.9" y2="181.0" stroke="#cfe0f5" stroke-opacity="0.2" stroke-width="1"/>
<line x1="805.3" y1="53.0" x2="805.3" y2="55.5" stroke="#cfe0f5" stroke-opacity="0.2" stroke-width="1"/>
<line x1="805.3" y1="185.0" x2="805.3" y2="182.5" stroke="#cfe0f5" stroke-opacity="0.2" stroke-width="1"/>
<line x1="822.7" y1="53.0" x2="822.7" y2="55.5" stroke="#cfe0f5" stroke-opacity="0.2" stroke-width="1"/>
<line x1="822.7" y1="185.0" x2="822.7" y2="182.5" stroke="#cfe0f5" stroke-opacity="0.2" stroke-width="1"/>
<line x1="840.2" y1="53.0" x2="840.2" y2="55.5" stroke="#cfe0f5" stroke-opacity="0.2" stroke-width="1"/>
<line x1="840.2" y1="185.0" x2="840.2" y2="182.5" stroke="#cfe0f5" stroke-opacity="0.2" stroke-width="1"/>
<line x1="857.6" y1="53.0" x2="857.6" y2="55.5" stroke="#cfe0f5" stroke-opacity="0.2" stroke-width="1"/>
<line x1="857.6" y1="185.0" x2="857.6" y2="182.5" stroke="#cfe0f5" stroke-opacity="0.2" stroke-width="1"/>
<line x1="875.0" y1="53.0" x2="875.0" y2="57.0" stroke="#cfe0f5" stroke-opacity="0.2" stroke-width="1"/>
<line x1="875.0" y1="185.0" x2="875.0" y2="181.0" stroke="#cfe0f5" stroke-opacity="0.2" stroke-width="1"/>
<rect x="4.0" y="184.7" width="871.0" height="1" fill="#a4aaad"/>
<rect x="4.0" y="185.7" width="871.0" height="14.6" fill="#111111"/>
<rect x="4.0" y="200.0" width="871.0" height="1" fill="#a4aaad"/>
<line x1="438.7" y1="53.0" x2="438.7" y2="185.0" stroke="#f0b48a" stroke-width="1.6" stroke-dasharray="1.6 0.5"/>
<path d="M434.2 59.5h10v8.5l-5 5.2l-5-5.2z" fill="#f48a24"/>
<path d="M434.1 53.6h9.6l-4.8 5.2z" fill="none" stroke="#d0d0d0" stroke-width="0.9"/>
<line x1="481.8" y1="53.0" x2="481.8" y2="185.0" stroke="#f0b48c" stroke-width="1.1" stroke-dasharray="5 2.5"/>
<polyline points="4.0,463.55 7.0,463.64 10.0,463.92 13.0,463.99 16.0,463.49 19.0,463.83 22.0,463.49 25.1,463.89 28.1,463.66 31.1,463.99 34.1,464.05 37.1,463.77 40.1,464.06 43.1,463.65 46.1,463.51 49.1,463.82 52.1,463.48 55.1,463.58 58.1,463.71 61.1,463.83 64.1,463.56 67.2,463.49 70.2,463.98 73.2,463.65 76.2,464.04 79.2,464.00 82.2,463.69 85.2,463.74 88.2,463.77 91.2,463.85 94.2,463.82 97.2,463.80 100.2,463.83 103.2,464.03 106.2,463.77 109.3,463.72 112.3,463.89 115.3,463.61 118.3,463.64 121.3,464.05 124.3,463.78 127.3,463.79 130.3,463.47 133.3,463.71 136.3,463.81 139.3,463.47 142.3,463.83 145.3,463.84 148.3,463.50 151.4,463.84 154.4,463.74 157.4,463.87 160.4,463.67 163.4,463.89 166.4,463.91 169.4,463.48 172.4,463.50 175.4,463.87 178.4,464.04 181.4,463.61 184.4,463.74 187.4,463.82 190.4,463.65 193.5,463.68 196.5,463.65 199.5,463.68 202.5,463.82 205.5,463.64 208.5,463.69 211.5,463.93 214.5,463.48 217.5,463.80 220.5,463.90 223.5,463.65 226.5,463.60 229.5,463.94 232.6,463.61 235.6,463.57 238.6,463.72 241.6,463.88 244.6,463.52 247.6,463.66 250.6,463.66 253.6,463.96 256.6,463.73 259.6,463.98 262.6,463.56 265.6,463.66 268.6,463.85 271.6,463.99 274.7,463.73 277.7,463.60 280.7,463.54 283.7,463.78 286.7,463.58 289.7,463.95" fill="none" stroke="#8a8510" stroke-width="9.0" filter="url(#gl)" stroke-opacity="0.9" transform="translate(0 0.96)"/>
<polyline points="4.0,463.55 7.0,463.64 10.0,463.92 13.0,463.99 16.0,463.49 19.0,463.83 22.0,463.49 25.1,463.89 28.1,463.66 31.1,463.99 34.1,464.05 37.1,463.77 40.1,464.06 43.1,463.65 46.1,463.51 49.1,463.82 52.1,463.48 55.1,463.58 58.1,463.71 61.1,463.83 64.1,463.56 67.2,463.49 70.2,463.98 73.2,463.65 76.2,464.04 79.2,464.00 82.2,463.69 85.2,463.74 88.2,463.77 91.2,463.85 94.2,463.82 97.2,463.80 100.2,463.83 103.2,464.03 106.2,463.77 109.3,463.72 112.3,463.89 115.3,463.61 118.3,463.64 121.3,464.05 124.3,463.78 127.3,463.79 130.3,463.47 133.3,463.71 136.3,463.81 139.3,463.47 142.3,463.83 145.3,463.84 148.3,463.50 151.4,463.84 154.4,463.74 157.4,463.87 160.4,463.67 163.4,463.89 166.4,463.91 169.4,463.48 172.4,463.50 175.4,463.87 178.4,464.04 181.4,463.61 184.4,463.74 187.4,463.82 190.4,463.65 193.5,463.68 196.5,463.65 199.5,463.68 202.5,463.82 205.5,463.64 208.5,463.69 211.5,463.93 214.5,463.48 217.5,463.80 220.5,463.90 223.5,463.65 226.5,463.60 229.5,463.94 232.6,463.61 235.6,463.57 238.6,463.72 241.6,463.88 244.6,463.52 247.6,463.66 250.6,463.66 253.6,463.96 256.6,463.73 259.6,463.98 262.6,463.56 265.6,463.66 268.6,463.85 271.6,463.99 274.7,463.73 277.7,463.60 280.7,463.54 283.7,463.78 286.7,463.58 289.7,463.95" fill="none" stroke="#f0e61c" stroke-width="6.0" filter="url(#gs)" transform="translate(0 -0.36)"/>
<line x1="289.7" y1="463.8" x2="298.4" y2="233.0" stroke="#a39c24" stroke-width="1.1" stroke-opacity="0.9"/>
<polyline points="298.4,232.26 301.4,231.96 304.5,232.11 307.5,232.51 310.5,232.48 313.6,232.64 316.6,232.42 319.6,232.34 322.7,232.48 325.7,232.83 328.8,232.55 331.8,232.62 334.8,232.69 337.9,232.72 340.9,232.74 343.9,233.06 347.0,232.62 350.0,232.55 353.0,233.12 356.1,233.10 359.1,233.17 362.1,232.85 365.2,233.17 368.2,233.17 371.3,232.75 374.3,233.07 377.3,233.13 380.4,233.03 383.4,232.95 386.4,232.81 389.5,232.85 392.5,232.78 395.5,232.69 398.6,233.01 401.6,232.83 404.6,233.14 407.7,232.69 410.7,233.20 413.8,233.08 416.8,233.22 419.8,233.20 422.9,233.20 425.9,233.01 428.9,232.67 432.0,233.11 435.0,232.77 438.0,232.85 441.1,233.07 444.1,232.98 447.1,232.92 450.2,233.23 453.2,233.04 456.2,232.88 459.3,232.82 462.3,233.19" fill="none" stroke="#8a8510" stroke-width="9.0" filter="url(#gl)" stroke-opacity="0.9" transform="translate(0 0.96)"/>
<polyline points="298.4,232.26 301.4,231.96 304.5,232.11 307.5,232.51 310.5,232.48 313.6,232.64 316.6,232.42 319.6,232.34 322.7,232.48 325.7,232.83 328.8,232.55 331.8,232.62 334.8,232.69 337.9,232.72 340.9,232.74 343.9,233.06 347.0,232.62 350.0,232.55 353.0,233.12 356.1,233.10 359.1,233.17 362.1,232.85 365.2,233.17 368.2,233.17 371.3,232.75 374.3,233.07 377.3,233.13 380.4,233.03 383.4,232.95 386.4,232.81 389.5,232.85 392.5,232.78 395.5,232.69 398.6,233.01 401.6,232.83 404.6,233.14 407.7,232.69 410.7,233.20 413.8,233.08 416.8,233.22 419.8,233.20 422.9,233.20 425.9,233.01 428.9,232.67 432.0,233.11 435.0,232.77 438.0,232.85 441.1,233.07 444.1,232.98 447.1,232.92 450.2,233.23 453.2,233.04 456.2,232.88 459.3,232.82 462.3,233.19" fill="none" stroke="#f0e61c" stroke-width="6.0" filter="url(#gs)" transform="translate(0 -0.36)"/>
<line x1="462.3" y1="233.0" x2="472.9" y2="463.8" stroke="#a39c24" stroke-width="1.1" stroke-opacity="0.9"/>
<polyline points="472.9,465.95 476.2,465.88 479.4,465.40 482.6,465.10 485.9,465.13 489.1,465.14 492.3,464.62 495.6,464.87 498.8,464.84 502.0,464.67 505.2,464.60 508.5,464.03 511.7,464.34 514.9,464.42" fill="none" stroke="#8a8510" stroke-width="9.0" filter="url(#gl)" stroke-opacity="0.9" transform="translate(0 0.96)"/>
<polyline points="472.9,465.95 476.2,465.88 479.4,465.40 482.6,465.10 485.9,465.13 489.1,465.14 492.3,464.62 495.6,464.87 498.8,464.84 502.0,464.67 505.2,464.60 508.5,464.03 511.7,464.34 514.9,464.42" fill="none" stroke="#f0e61c" stroke-width="6.0" filter="url(#gs)" transform="translate(0 -0.36)"/>
<line x1="514.9" y1="463.8" x2="525.2" y2="233.0" stroke="#a39c24" stroke-width="1.1" stroke-opacity="0.9"/>
<polyline points="525.2,231.78 528.3,232.02 531.4,232.11 534.6,232.35 537.7,232.36 540.8,232.45 543.9,232.69 547.0,232.27 550.1,232.35 553.2,232.43 556.4,232.47 559.5,232.47 562.6,233.04 565.7,232.99 568.8,232.55 571.9,232.82 575.0,232.73 578.2,232.74 581.3,232.78 584.4,232.97 587.5,232.94 590.6,232.81 593.7,232.72 596.8,232.81 600.0,232.69 603.1,232.96" fill="none" stroke="#8a8510" stroke-width="9.0" filter="url(#gl)" stroke-opacity="0.9" transform="translate(0 0.96)"/>
<polyline points="525.2,231.78 528.3,232.02 531.4,232.11 534.6,232.35 537.7,232.36 540.8,232.45 543.9,232.69 547.0,232.27 550.1,232.35 553.2,232.43 556.4,232.47 559.5,232.47 562.6,233.04 565.7,232.99 568.8,232.55 571.9,232.82 575.0,232.73 578.2,232.74 581.3,232.78 584.4,232.97 587.5,232.94 590.6,232.81 593.7,232.72 596.8,232.81 600.0,232.69 603.1,232.96" fill="none" stroke="#f0e61c" stroke-width="6.0" filter="url(#gs)" transform="translate(0 -0.36)"/>
<line x1="603.1" y1="233.0" x2="613.2" y2="463.8" stroke="#a39c24" stroke-width="1.1" stroke-opacity="0.9"/>
<polyline points="613.2,466.10 616.2,465.56 619.2,465.09 622.2,464.90 625.2,464.82 628.2,464.78 631.2,464.74 634.2,464.37 637.3,464.52 640.3,464.33 643.3,464.14 646.3,464.04 649.3,464.06 652.3,464.13 655.3,463.93 658.3,464.06 661.3,463.89 664.3,463.74 667.3,463.89 670.4,463.97 673.4,463.58 676.4,463.78 679.4,463.77 682.4,464.04 685.4,464.06 688.4,463.72 691.4,464.03 694.4,463.96 697.4,463.64 700.5,463.76 703.5,463.55 706.5,463.96 709.5,463.87 712.5,464.00 715.5,463.95 718.5,463.87 721.5,463.91 724.5,463.81 727.5,463.53 730.5,463.82 733.6,463.47 736.6,463.55 739.6,463.93 742.6,463.49 745.6,463.52 748.6,463.52 751.6,463.99 754.6,463.57 757.6,463.48 760.6,463.97 763.7,463.54 766.7,463.97 769.7,463.87 772.7,463.96 775.7,464.03 778.7,463.81 781.7,463.94 784.7,463.48 787.7,463.92 790.7,463.77 793.7,463.89 796.8,463.53 799.8,463.91 802.8,464.02 805.8,463.50 808.8,463.66 811.8,463.80 814.8,463.96 817.8,463.61 820.8,463.57 823.8,463.61 826.8,463.83 829.9,463.91 832.9,463.70 835.9,463.68 838.9,463.70 841.9,463.67 844.9,463.71 847.9,463.51 850.9,463.76 853.9,464.05 856.9,463.71 860.0,463.91 863.0,463.56 866.0,463.88 869.0,463.92 872.0,463.87 875.0,463.77" fill="none" stroke="#8a8510" stroke-width="9.0" filter="url(#gl)" stroke-opacity="0.9" transform="translate(0 0.96)"/>
<polyline points="613.2,466.10 616.2,465.56 619.2,465.09 622.2,464.90 625.2,464.82 628.2,464.78 631.2,464.74 634.2,464.37 637.3,464.52 640.3,464.33 643.3,464.14 646.3,464.04 649.3,464.06 652.3,464.13 655.3,463.93 658.3,464.06 661.3,463.89 664.3,463.74 667.3,463.89 670.4,463.97 673.4,463.58 676.4,463.78 679.4,463.77 682.4,464.04 685.4,464.06 688.4,463.72 691.4,464.03 694.4,463.96 697.4,463.64 700.5,463.76 703.5,463.55 706.5,463.96 709.5,463.87 712.5,464.00 715.5,463.95 718.5,463.87 721.5,463.91 724.5,463.81 727.5,463.53 730.5,463.82 733.6,463.47 736.6,463.55 739.6,463.93 742.6,463.49 745.6,463.52 748.6,463.52 751.6,463.99 754.6,463.57 757.6,463.48 760.6,463.97 763.7,463.54 766.7,463.97 769.7,463.87 772.7,463.96 775.7,464.03 778.7,463.81 781.7,463.94 784.7,463.48 787.7,463.92 790.7,463.77 793.7,463.89 796.8,463.53 799.8,463.91 802.8,464.02 805.8,463.50 808.8,463.66 811.8,463.80 814.8,463.96 817.8,463.61 820.8,463.57 823.8,463.61 826.8,463.83 829.9,463.91 832.9,463.70 835.9,463.68 838.9,463.70 841.9,463.67 844.9,463.71 847.9,463.51 850.9,463.76 853.9,464.05 856.9,463.71 860.0,463.91 863.0,463.56 866.0,463.88 869.0,463.92 872.0,463.87 875.0,463.77" fill="none" stroke="#f0e61c" stroke-width="6.0" filter="url(#gs)" transform="translate(0 -0.36)"/>
<line x1="292.4" y1="201.0" x2="292.4" y2="495.0" stroke="#f0a878" stroke-width="1.4"/>
<path d="M291 207h10.4v8.6l-5.2 5.4l-5.2-5.4z" fill="#f48a24"/>
<path d="M291.6 201.6l4.6 4.6l4.6-4.6" fill="none" stroke="#d8d8d8" stroke-width="1"/>
<line x1="466.4" y1="201.0" x2="466.4" y2="495.0" stroke="#f0b48c" stroke-width="1.1" stroke-dasharray="6 3"/>
<path d="M859.5 278.4l3.6-4.8h14v9.6h-14z" fill="#f48a24"/>
<path d="M860 87.6l3.4-4.6h13.6v9.2h-13.6z" fill="#f48a24"/>
<path d="M3.6 113.8h12.4l4.6 5.2l-4.6 5.2h-12.4z" fill="#f4ec30" stroke="#15150a" stroke-width="1.1" stroke-linejoin="round"/>
<path d="M3.6 343.1h12.4l4.4 4.7l-4.4 4.7h-12.4z" fill="#f4ec30" stroke="#15150a" stroke-width="1.1" stroke-linejoin="round"/>
<rect x="308.3" y="40.7" width="262.2" height="10.2" fill="#2b3134"/>
<polyline points="308.3,49.37 309.1,50.00 320.0,42.00 330.8,50.00 341.7,42.00 352.5,50.00 363.4,42.00 374.2,50.00 385.1,42.00 395.9,50.00 406.8,42.00 417.6,50.00 428.5,42.00 439.3,50.00 450.2,42.00 461.0,50.00 471.9,42.00 482.8,50.00 493.6,42.00 504.4,50.00 515.3,42.00 526.1,50.00 537.0,42.00 547.8,50.00 558.7,42.00 569.5,50.00 570.5,49.30" fill="none" stroke="#5f686c" stroke-width="0.9"/>
<path d="M434.6 41h10.6l-5.3 5.8z" fill="#f29a3c"/>
<path d="M435.6 41h8.6l-0.8 0.9h-7z" fill="#f8c27e"/>
<rect x="857" y="41.6" width="12" height="1.5" fill="#eef0f1"/>
<rect x="857" y="44.9" width="12" height="1.5" fill="#eef0f1"/>
<rect x="857" y="48.2" width="12" height="1.5" fill="#eef0f1"/>
<path d="M862.6 188.2l9.6 9.6M872.2 188.2l-9.6 9.6" stroke="#eef0f1" stroke-width="1.2" fill="none"/>
<path d="M852 479.2l4.2 3.9l-4.2 3.9" stroke="#eef0f1" stroke-width="1.5" fill="none"/>
<rect x="856.6" y="477.3" width="12.2" height="1.7" fill="#eef0f1"/>
<rect x="856.6" y="482.3" width="12.2" height="1.7" fill="#eef0f1"/>
<rect x="856.6" y="487.3" width="12.2" height="1.7" fill="#eef0f1"/>
</svg>
<div class="t tl" style="left:61.1px;top:484px;width:60px;color:#d27c3a">-11.8µs</div>
<div class="t tl" style="left:148.2px;top:484px;width:60px;color:#d27c3a">-6.8µs</div>
<div class="t tl" style="left:235.3px;top:484px;width:60px;color:#d27c3a">-1.8µs</div>
<div class="t tl" style="left:322.4px;top:484px;width:60px;color:#d27c3a">3.2µs</div>
<div class="t tl" style="left:409.5px;top:484px;width:60px;color:#d27c3a">8.2µs</div>
<div class="t tl" style="left:496.6px;top:484px;width:60px;color:#d27c3a">13.2µs</div>
<div class="t tl" style="left:583.7px;top:484px;width:60px;color:#d27c3a">18.2µs</div>
<div class="t tl" style="left:670.8px;top:484px;width:60px;color:#d27c3a">23.2µs</div>
<div class="t tl" style="left:757.9px;top:484px;width:60px;color:#d27c3a">28.2µs</div>
<div class="t tl" style="left:61.1px;top:175px;width:60px;color:#5283cc">-80µs</div>
<div class="t tl" style="left:148.2px;top:175px;width:60px;color:#5283cc">-60µs</div>
<div class="t tl" style="left:235.3px;top:175px;width:60px;color:#5283cc">-40µs</div>
<div class="t tl" style="left:322.4px;top:175px;width:60px;color:#5283cc">-20µs</div>
<div class="t tl" style="left:409.5px;top:175px;width:60px;color:#d27c3a">0s</div>
<div class="t tl" style="left:496.6px;top:175px;width:60px;color:#d27c3a">20µs</div>
<div class="t tl" style="left:583.7px;top:175px;width:60px;color:#5283cc">40µs</div>
<div class="t tl" style="left:670.8px;top:175px;width:60px;color:#5283cc">60µs</div>
<div class="t tl" style="left:757.9px;top:175px;width:60px;color:#5283cc">80µs</div>
<div class="t vl" style="left:790px;top:234.3px;width:80.5px;color:#dcd63a">300mV</div>
<div class="t vl" style="left:790px;top:271.1px;width:80.5px;color:#dcd63a">200mV</div>
<div class="t vl" style="left:790px;top:307.9px;width:80.5px;color:#dcd63a">100mV</div>
<div class="t vl" style="left:790px;top:344.6px;width:80.5px;color:#dcd63a">0V</div>
<div class="t vl" style="left:790px;top:381.4px;width:80.5px;color:#dcd63a">-100mV</div>
<div class="t vl" style="left:790px;top:418.1px;width:80.5px;color:#dcd63a">-200mV</div>
<div class="t vl" style="left:790px;top:65.5px;width:80px;color:#5283cc">300mV</div>
<div class="t vl" style="left:790px;top:82.2px;width:80px;color:#5283cc">200mV</div>
<div class="t vl" style="left:790px;top:98.9px;width:80px;color:#5283cc">100mV</div>
<div class="t vl" style="left:790px;top:115.6px;width:80px;color:#5283cc">0V</div>
<div class="t vl" style="left:790px;top:132.3px;width:80px;color:#5283cc">-100mV</div>
<div class="t vl" style="left:790px;top:149.0px;width:80px;color:#5283cc">-200mV</div>
<div class="t" style="left:377.5px;top:189px;font-size:7.6px;color:#e6e8ea">Scale: 5.00µs/div</div>
<div class="t" style="left:441.7px;top:189px;font-size:7.6px;color:#e6e8ea">Position: 8.20µs</div>
<div class="t" style="left:8px;top:115.5px;font-size:7px;color:#222;font-weight:bold">1</div>
<div class="t" style="left:8px;top:344.5px;font-size:7px;color:#222;font-weight:bold">1</div>
<div class="t" style="left:866.5px;top:275px;font-size:7px;color:#6a2a00;font-weight:bold">T</div>
<div class="t" style="left:866.5px;top:84.2px;font-size:7px;color:#6a2a00;font-weight:bold">T</div>
<div class="t" style="left:293.8px;top:208.5px;font-size:7px;color:#6a2a00;font-weight:bold">T</div>
<div class="t" style="left:436.6px;top:61px;font-size:7px;color:#6a2a00;font-weight:bold">T</div>

<!-- ===== RESULT PANEL ===== -->
<div class="a" style="left:879px;top:36px;width:79px;height:461px;background:#0c0e0f;border-radius:5px 5px 4px 4px"></div>
<div class="a" style="left:880px;top:37px;width:77.5px;height:19px;background:#4f5558;border-radius:4.5px 4.5px 0 0"></div>
<div class="t" style="left:908.6px;top:42.8px;font-size:8.1px;color:#f0f2f3">Result</div>
<div class="a" style="left:880px;top:57px;width:77.5px;height:439px;background:#323c42;border-radius:0 0 3.5px 3.5px"></div>


<!-- RiseTime card -->
<div class="a" style="left:882.5px;top:59px;width:66px;height:14px;background:#4c5a61;border-radius:3px 3px 0 0"></div>
<div class="a" style="left:882.5px;top:72px;width:71px;height:61px;background:#4c5a61;border-radius:0 3px 3px 3px"></div>
<div class="a" style="left:886px;top:63px;width:9px;height:9px;background:#23282b"></div>
<svg class="a" style="left:886px;top:63px" width="9" height="9" viewBox="0 0 9 9"><path d="M0.5 8.4H2.2L6 0.8H8.6" fill="none" stroke="#e8eaec" stroke-width="1"/></svg>
<div class="t" id="rt" style="left:897.5px;top:64.2px;font-size:8.1px;color:#f4f5f6">RiseTime(<span style="color:#e8e032">C1</span>)</div>
<div class="row" style="top:75.5px"><i>Cur:</i><b>469.40ns</b></div>
<div class="row" style="top:85.3px"><i>Avg:</i><b>471.68ns</b></div>
<div class="row" style="top:95.1px"><i>Max:</i><b>476.40ns</b></div>
<div class="row" style="top:104.9px"><i>Min:</i><b>467.20ns</b></div>
<div class="row" style="top:114.7px"><i>Dev:</i><b>2.5743ns</b></div>
<div class="row" style="top:124.5px"><i>Cnt:</i><b>42</b></div>
<svg class="a" style="left:942.5px;top:125px" width="9" height="4.4" viewBox="0 0 9 4.4"><path d="M0.6 4L4.5 0.4L8.4 4z" fill="#f4f5f6" stroke="#f4f5f6" stroke-width="0.8" stroke-linejoin="round"/></svg>
<!-- +Pulses card -->
<div class="a" style="left:882.5px;top:136.5px;width:59.5px;height:15px;background:#4d595e;border:1.5px solid #3f9c7c;border-bottom:none;border-radius:3.5px 3.5px 0 0;box-shadow:inset 0 2px 3px -1px #3f9c7c"></div>
<div class="a" style="left:882.5px;top:150px;width:71.5px;height:60px;background:#4d595e;border:1.5px solid #3f9c7c;border-radius:0 3.5px 3.5px 3.5px;box-shadow:inset 0 0 4px 0.5px #3f9c7c"></div>
<div class="a" style="left:884.2px;top:148px;width:56.1px;height:5px;background:#4d595e"></div>
<div class="a" style="left:886px;top:139px;width:9.5px;height:8.5px;background:#23282b"></div>
<svg class="a" style="left:886px;top:139px" width="9.5" height="8.5" viewBox="0 0 9.5 8.5"><path d="M0.4 7.6H2.4V0.9H6.4V7.6H9.2" fill="none" stroke="#e8eaec" stroke-width="1"/></svg>
<div class="t" id="pt" style="left:898.3px;top:140px;font-size:8.1px;color:#f4f5f6;font-weight:bold;transform-origin:0 0;transform:scaleX(0.86)">+Pulses(<span style="color:#e8e032">C1</span>)</div>
<div class="row" style="top:151.3px"><i>Cur:</i><b>9.9902us</b></div>
<div class="row" style="top:161.1px"><i>Avg:</i><b>9.9894us</b></div>
<div class="row" style="top:170.9px"><i>Max:</i><b>9.9954us</b></div>
<div class="row" style="top:180.7px"><i>Min:</i><b>9.9826us</b></div>
<div class="row" style="top:190.5px"><i>Dev:</i><b>5.8902ns</b></div>
<div class="row" style="top:200.5px"><i>Cnt:</i><b>42</b></div>
<svg class="a" style="left:942.5px;top:201px" width="9" height="4.4" viewBox="0 0 9 4.4"><path d="M0.6 4L4.5 0.4L8.4 4z" fill="#f4f5f6" stroke="#f4f5f6" stroke-width="0.8" stroke-linejoin="round"/></svg>

<!-- ===== BOTTOM BAR ===== -->
<div class="a" style="left:2.5px;top:499px;width:37px;height:38.5px;background:#060708;border-radius:4px"></div>
<div class="a" style="left:42.5px;top:499px;width:324px;height:39px;background:#060708;border-radius:4px"></div>
<div class="a" style="left:369px;top:499px;width:256.6px;height:39px;background:#060708;border-radius:4px"></div>
<div class="a" style="left:627.8px;top:499px;width:249.6px;height:39px;background:#060708;border-radius:4px"></div>
<div class="a" style="left:879px;top:499px;width:78.5px;height:38.5px;background:#030404;border-radius:4.5px"></div>

<!-- gear -->
<svg class="a" style="left:0;top:0" width="60" height="540" viewBox="0 0 60 540"><defs><linearGradient id="gg" x1="0.2" y1="0" x2="0.8" y2="1"><stop offset="0" stop-color="#e4e6e7"/><stop offset="0.55" stop-color="#a8acaf"/><stop offset="1" stop-color="#5e6265"/></linearGradient><radialGradient id="gi"><stop offset="0" stop-color="#46494b"/><stop offset="1" stop-color="#303234"/></radialGradient></defs><polygon points="38.30,518.00 38.28,517.11 38.21,516.21 38.09,515.32 37.93,514.44 36.78,513.83 35.39,513.39 34.36,512.95 34.08,512.27 33.76,511.60 33.41,510.95 33.03,510.32 32.61,509.71 32.16,509.13 32.29,508.02 32.60,506.60 32.64,505.29 31.96,504.71 31.25,504.17 30.51,503.66 29.75,503.19 28.96,502.76 28.16,502.38 27.33,502.04 26.48,501.74 25.37,502.42 24.30,503.41 23.41,504.07 22.67,503.98 21.94,503.92 21.20,503.90 20.46,503.92 19.73,503.98 18.99,504.07 18.10,503.41 17.03,502.42 15.92,501.74 15.07,502.04 14.24,502.38 13.44,502.76 12.65,503.19 11.89,503.66 11.15,504.17 10.44,504.71 9.76,505.29 9.80,506.60 10.11,508.02 10.24,509.13 9.79,509.71 9.37,510.32 8.99,510.95 8.64,511.60 8.32,512.27 8.04,512.95 7.01,513.39 5.62,513.83 4.47,514.44 4.31,515.32 4.19,516.21 4.12,517.11 4.10,518.00 4.12,518.89 4.19,519.79 4.31,520.68 4.47,521.56 5.62,522.17 7.01,522.61 8.04,523.05 8.32,523.73 8.64,524.40 8.99,525.05 9.37,525.68 9.79,526.29 10.24,526.87 10.11,527.98 9.80,529.40 9.76,530.71 10.44,531.29 11.15,531.83 11.89,532.34 12.65,532.81 13.44,533.24 14.24,533.62 15.07,533.96 15.92,534.26 17.03,533.58 18.10,532.59 18.99,531.93 19.73,532.02 20.46,532.08 21.20,532.10 21.94,532.08 22.67,532.02 23.41,531.93 24.30,532.59 25.37,533.58 26.48,534.26 27.33,533.96 28.16,533.62 28.96,533.24 29.75,532.81 30.51,532.34 31.25,531.83 31.96,531.29 32.64,530.71 32.60,529.40 32.29,527.98 32.16,526.87 32.61,526.29 33.03,525.68 33.41,525.05 33.76,524.40 34.08,523.73 34.36,523.05 35.39,522.61 36.78,522.17 37.93,521.56 38.09,520.68 38.21,519.79 38.28,518.89" fill="url(#gg)" stroke="#2a2c2e" stroke-width="0.8"/><circle cx="21.2" cy="518.0" r="12" fill="url(#gi)" stroke="#1c1e1f" stroke-width="0.8"/><path d="M15.2 522.5h2.4v-6h4v6" fill="none" stroke="#8e9396" stroke-width="1.1"/><path d="M22.7 516.5q2.5 -0.5 2.8 2.5t3 3" fill="none" stroke="#8e9396" stroke-width="1.1"/><path d="M16.2 512.8q1.2 -1.6 2.4 0t2.4 0t2.4 0t2.4 0" fill="none" stroke="#7e8386" stroke-width="0.9"/></svg>
<!-- CH1 -->
<div class="chb" style="left:44.6px;top:503.6px;height:33.6px;width:77.6px;background:#526065;border:1.4px solid #d8da5a;border-radius:3px"></div>
<div class="a" style="left:80px;top:504.6px;width:41px;height:5px;background:#f0e632"></div>
<div class="a" style="left:44.6px;top:501px;width:37px;height:8.6px;background:#060708;border:1.3px solid #d8d040;border-bottom:none;border-radius:3px 3px 0 0"></div>
<div class="t" style="left:52px;top:501.8px;font-size:8px;color:#f0e632">CH1</div>
<div class="c1" style="left:51.3px;top:512.5px;color:#f0e632;font-size:9.2px">100.00mV/</div>
<div class="c2" style="left:51.3px;top:524.5px;color:#f4f5f6">0.00V</div>
<div class="a" style="left:99.5px;top:514.4px;width:8.5px;height:1px;background:#f0f2f3"></div>
<div class="a" style="left:99.5px;top:517.3px;width:8.5px;height:1px;background:#f0f2f3"></div>
<div class="c1" style="left:110.2px;top:510.8px;color:#f0f2f3;font-size:10.6px;transform-origin:0 0;transform:scaleX(0.86)">Ω</div>
<!-- CH2 -->
<div class="chb" style="left:126px;top:509px;height:28px;width:76.5px;height:27.5px;background:linear-gradient(#3e494f,#343e44 75%);border:1px solid #48535a;border-radius:0 3px 3px 3px"></div>
<div class="a" style="left:161px;top:504.5px;width:41.5px;height:5px;background:linear-gradient(#525d64,#444f56);border-radius:0 3px 0 0"></div>
<div class="chtab" style="left:126.5px;width:35px;padding-left:6px">CH2</div>
<div class="c1" style="left:131.5px;top:513.1px;color:#aab2b7">100.00mV/</div>
<div class="c2" style="left:131.5px;top:525px;color:#aab2b7">0.00V</div>
<div class="a" style="left:181px;top:514.4px;width:8px;height:1px;background:#98a0a5"></div>
<div class="a" style="left:181px;top:517.3px;width:8px;height:1px;background:#98a0a5"></div>
<!-- CH3 -->
<div class="chb" style="left:206px;top:509px;height:28px;width:76.5px;height:27.5px;background:linear-gradient(#3e494f,#343e44 75%);border:1px solid #48535a;border-radius:0 3px 3px 3px"></div>
<div class="a" style="left:241px;top:504.5px;width:41.5px;height:5px;background:linear-gradient(#525d64,#444f56);border-radius:0 3px 0 0"></div>
<div class="chtab" style="left:206.5px;width:35px;padding-left:6px">CH3</div>
<div class="c1" style="left:211.5px;top:513.1px;color:#aab2b7">200.00mV/</div>
<div class="c2" style="left:211.5px;top:525px;color:#aab2b7">-95.51mV</div>
<div class="a" style="left:261px;top:514.4px;width:8px;height:1px;background:#98a0a5"></div>
<div class="a" style="left:261px;top:517.3px;width:8px;height:1px;background:#98a0a5"></div>
<div class="c1" style="left:271px;top:510.8px;color:#aab2b7;font-size:10.6px;transform-origin:0 0;transform:scaleX(0.86)">Ω</div>
<!-- CH4 -->
<div class="chb" style="left:286.5px;top:509px;height:28px;width:76.5px;height:27.5px;background:linear-gradient(#3e494f,#343e44 75%);border:1px solid #48535a;border-radius:0 3px 3px 3px"></div>
<div class="a" style="left:321.5px;top:504.5px;width:41.5px;height:5px;background:linear-gradient(#525d64,#444f56);border-radius:0 3px 0 0"></div>
<div class="chtab" style="left:287px;width:35px;padding-left:6px">CH4</div>
<div class="c1" style="left:292px;top:513.1px;color:#aab2b7">100.00mV/</div>
<div class="c2" style="left:292px;top:525px;color:#aab2b7">0.00V</div>
<div class="a" style="left:341.5px;top:514.4px;width:8px;height:1px;background:#98a0a5"></div>
<div class="a" style="left:341.5px;top:517.3px;width:8px;height:1px;background:#98a0a5"></div>
<!-- Math1-4 -->
<div class="chb" style="left:371.5px;top:505px;height:31.5px;width:60px;background:linear-gradient(#4a565c,#353f45 65%);border:1px solid #505b62;border-top-color:#6a767e;border-radius:3px 0 3px 3px"></div>
<div class="chtab" style="left:396.5px;width:35px;text-align:right;padding-right:2.6px;font-size:8.2px;color:#c2c7ca;box-shadow:0 0 0 0.8px #59636a">Math1</div>
<div class="c1" style="left:376px;top:512.4px;color:#c4c9cc;font-size:9.2px">23.98dB/</div>
<div class="c2" style="left:376px;top:525.1px;color:#bcc2c6;font-size:7.8px">FFT(CH1)</div>
<div class="chb" style="left:435.5px;top:505px;height:31.5px;width:60px;background:linear-gradient(#4a565c,#353f45 65%);border:1px solid #505b62;border-top-color:#6a767e;border-radius:3px 0 3px 3px"></div>
<div class="chtab" style="left:460.5px;width:35px;text-align:right;padding-right:2.6px;font-size:8.2px;color:#c2c7ca;box-shadow:0 0 0 0.8px #59636a">Math2</div>
<div class="c1" style="left:440px;top:512.4px;color:#c4c9cc;font-size:9.2px">401.33mV/</div>
<div class="c2" style="left:440px;top:525.1px;color:#bcc2c6;font-size:7.8px">CH1+CH1</div>
<div class="chb" style="left:499px;top:505px;height:31.5px;width:60px;background:linear-gradient(#4a565c,#353f45 65%);border:1px solid #505b62;border-top-color:#6a767e;border-radius:3px 0 3px 3px"></div>
<div class="chtab" style="left:524px;width:35px;text-align:right;padding-right:2.6px;font-size:8.2px;color:#c2c7ca;box-shadow:0 0 0 0.8px #59636a">Math3</div>
<div class="c1" style="left:503.5px;top:512.4px;color:#c4c9cc;font-size:9.2px">500.00mV/</div>
<div class="c2" style="left:503.5px;top:525.1px;color:#bcc2c6;font-size:7.8px">CH1+CH1</div>
<div class="chb" style="left:562.5px;top:505px;height:31.5px;width:60px;background:linear-gradient(#4a565c,#353f45 65%);border:1px solid #505b62;border-top-color:#6a767e;border-radius:3px 0 3px 3px"></div>
<div class="chtab" style="left:587.5px;width:35px;text-align:right;padding-right:2.6px;font-size:8.2px;color:#c2c7ca;box-shadow:0 0 0 0.8px #59636a">Math4</div>
<div class="c1" style="left:567px;top:512.4px;color:#c4c9cc;font-size:9.2px">500.00mV/</div>
<div class="c2" style="left:567px;top:525.1px;color:#bcc2c6;font-size:7.8px">CH1+CH1</div>
<!-- RTSA -->
<div class="chb" style="left:630.6px;top:505px;height:31.5px;width:60px;background:linear-gradient(#4a565c,#353f45 65%);border:1px solid #505b62;border-top-color:#6a767e;border-radius:3px 0 3px 3px"></div>
<div class="chtab" style="left:656.3px;width:34.3px;text-align:right;padding-right:3.2px;letter-spacing:0.7px;color:#c2c7ca;box-shadow:0 0 0 0.8px #59636a">RTSA</div>
<div class="c2" style="left:635.4px;top:512.8px;color:#bcc2c6;font-size:8.6px">C: 500MHz</div>
<div class="c2" style="left:635.4px;top:525px;color:#bcc2c6;font-size:7.6px">S: 20kHz</div>
<!-- clock -->
<div class="t" style="left:906px;top:503px;font-size:8.2px;font-weight:bold;font-style:italic;color:#f4f5f6;letter-spacing:-0.7px">LXI</div>
<svg class="a" style="left:920.4px;top:502px" width="12" height="9.4" viewBox="0 0 13 10"><path d="M0.6 3.6H2.6L6 0.8V9.2L2.6 6.4H0.6z" fill="none" stroke="#c8ccd0" stroke-width="0.9"/><path d="M8 3l3 -1.6M8 5h3.4M8 7l3 1.6" stroke="#8a9297" stroke-width="0.8" fill="none"/></svg>
<div class="t" style="left:879px;width:79px;text-align:center;top:517.2px;font-size:8px;letter-spacing:-0.2px;color:#f4f5f6">19:02:37</div>
<div class="t" style="left:879.5px;width:79px;text-align:center;top:528.8px;font-size:8px;letter-spacing:0.22px;color:#f4f5f6">2024/08/01</div>
</body></html>
